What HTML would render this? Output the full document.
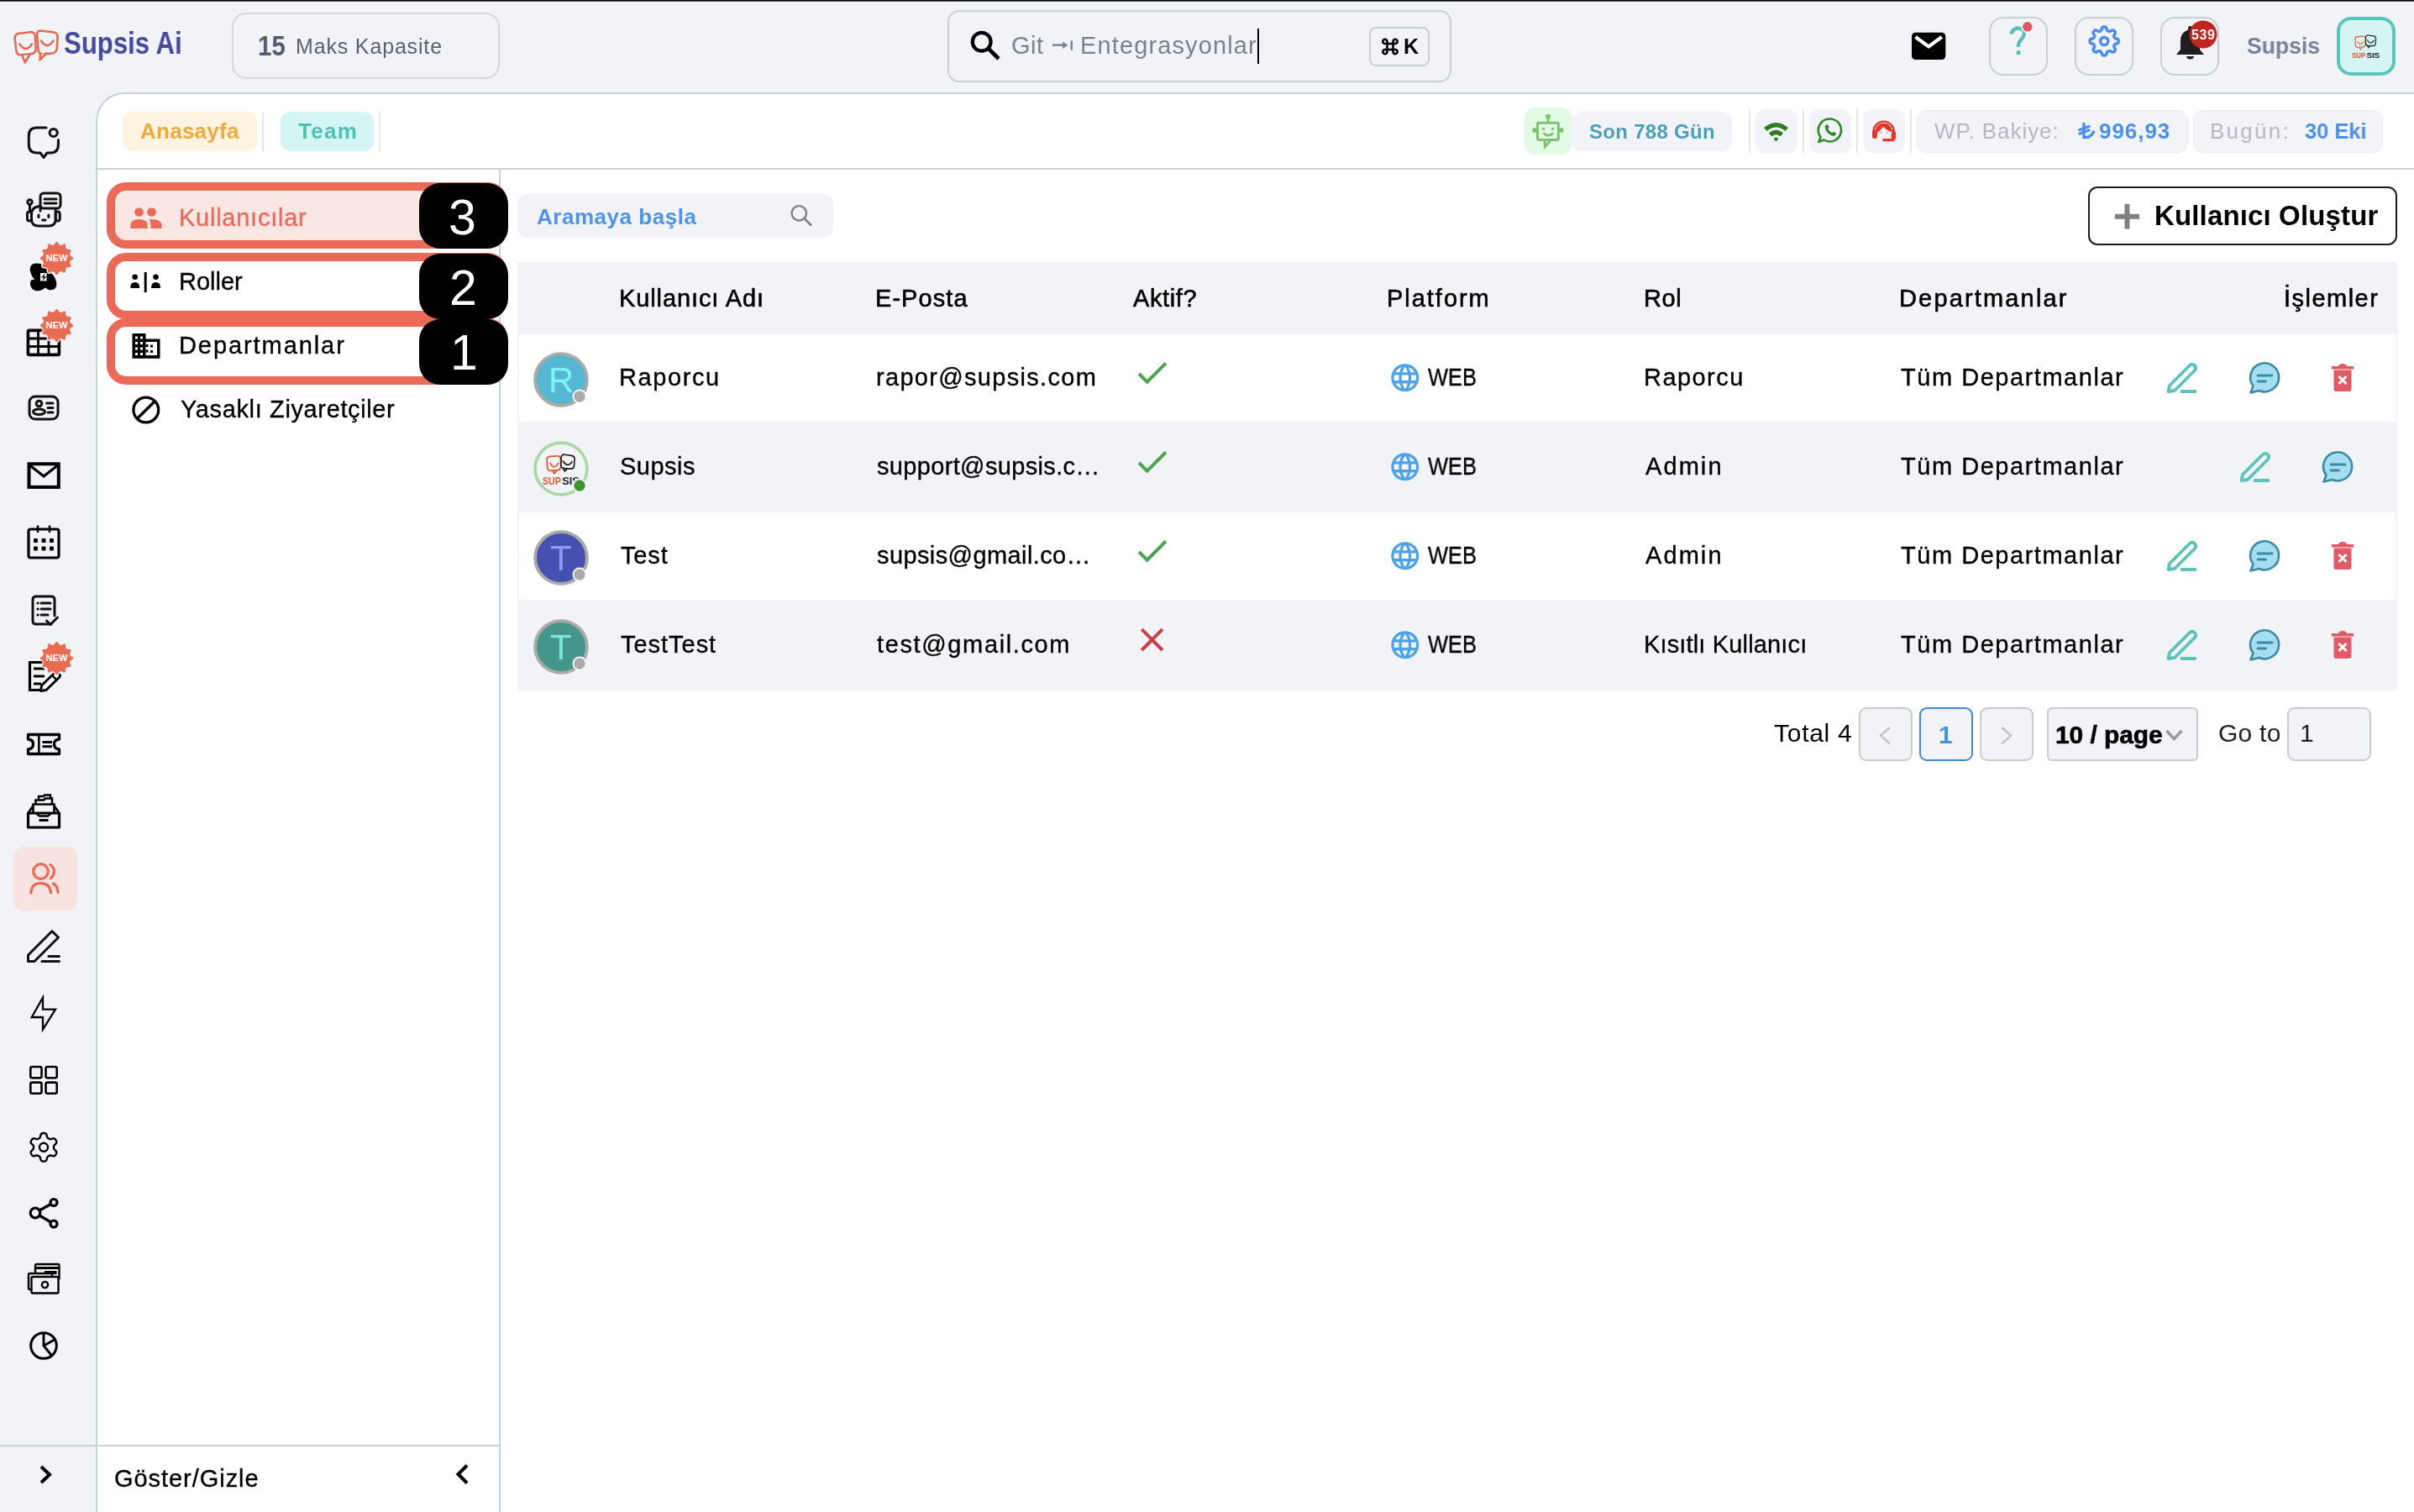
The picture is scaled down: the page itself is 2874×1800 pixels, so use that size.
<!DOCTYPE html>
<html><head><meta charset="utf-8"><title>Supsis Ai - Kullanıcılar</title>
<style>
html,body{margin:0;padding:0}
body{width:2874px;height:1800px;overflow:hidden;background:#f2f3f7;position:relative;font-family:"Liberation Sans",sans-serif}
.a{position:absolute;display:block}
.t{position:absolute;white-space:nowrap;font-family:"Liberation Sans",sans-serif;will-change:transform}
</style></head><body>
<div class=a style="left:0px;top:0px;width:2874px;height:1px;background:#000"></div>
<div class=a style="left:0px;top:1px;width:2874px;height:1px;background:#555"></div>
<svg class=a style="left:12px;top:32px;" width="64" height="46" viewBox="0 0 64 46"><g fill="none" stroke="#e36b53" stroke-width="2.6" stroke-linejoin="round" stroke-linecap="round">
<path d="M10.96 7.77 L23.54 6.23 Q29.50 5.50 29.85 11.49 L30.65 25.51 Q31.00 31.50 25.04 32.15 L13.96 33.35 Q8.00 34.00 7.30 28.04 L5.70 14.46 Q5.00 8.50 10.96 7.77 Z"/>
<path d="M14.5 34 L17.8 42.5 L23 33.5" fill="#f2f3f7"/>
<path d="M37.46 4.70 L51.04 6.30 Q57.00 7.00 56.63 12.99 L55.87 25.01 Q55.50 31.00 49.53 31.56 L39.97 32.44 Q34.00 33.00 33.48 27.02 L32.02 9.98 Q31.50 4.00 37.46 4.70 Z" fill="#f2f3f7"/>
<path d="M36 32.5 L35.5 39.5 L43 31.5" fill="#f2f3f7"/>
<path d="M11.5 20.5 Q18.5 31.5 26 20.5"/>
<path d="M37 16.5 Q44 27.5 51.5 16.5"/>
</g></svg>
<div class=t style="left:76.2px;top:33.0px;font-size:37px;line-height:37px;font-weight:700;color:#4649a0;letter-spacing:0.00px;transform:scaleX(0.8408);transform-origin:0 0;">Supsis Ai</div>
<div class=a style="left:276px;top:15px;width:319px;height:79px;border:2px solid #d6d8dc;border-radius:17px;box-sizing:border-box"></div>
<div class=t style="left:307.1px;top:37.0px;font-size:34px;line-height:34px;font-weight:700;color:#555a6e;letter-spacing:0.00px;transform:scaleX(0.8651);transform-origin:0 0;">15</div>
<div class=t style="left:351.8px;top:43.0px;font-size:25px;line-height:25px;font-weight:400;color:#5a5f72;letter-spacing:0.84px;">Maks Kapasite</div>
<div class=a style="left:1128px;top:12px;width:600px;height:86px;border:2px solid #c8cfd6;border-radius:14px;box-sizing:border-box"></div>
<svg class=a style="left:1150px;top:32px;" width="46" height="44" viewBox="0 0 46 44"><circle cx="18.7" cy="17.7" r="10.9" fill="none" stroke="#000" stroke-width="4.2"/>
<line x1="26.5" y1="25.5" x2="39" y2="38" stroke="#000" stroke-width="4.6"/></svg>
<div class=t style="left:1204.0px;top:40.3px;font-size:29px;line-height:29px;font-weight:400;color:#7c8190;letter-spacing:0.50px;">Git</div>
<svg class=a style="left:1250px;top:44px;" width="30" height="20" viewBox="0 0 30 20"><g stroke="#7c8190" stroke-width="2.4" fill="#7c8190"><line x1="3" y1="9.7" x2="17" y2="9.7"/><path d="M15 5.5 L21.5 9.7 L15 14 Z" stroke="none"/><line x1="25.8" y1="4.4" x2="25.8" y2="15.7"/></g></svg>
<div class=t style="left:1285.7px;top:40.3px;font-size:29px;line-height:29px;font-weight:400;color:#7c8190;letter-spacing:1.12px;">Entegrasyonlar</div>
<div class=a style="left:1497px;top:34px;width:2px;height:42px;background:#000"></div>
<div class=a style="left:1630px;top:32px;width:72px;height:47px;border:2px solid #c8cfd6;border-radius:8px;box-sizing:border-box"></div>
<svg class=a style="left:1644px;top:45px;" width="22" height="21" viewBox="0 0 21 21"><path d="M7 7 H14 V14 H7 Z M7 7 V4.5 A2.6 2.6 0 1 0 4.5 7 H7 M14 7 V4.5 A2.6 2.6 0 1 1 16.5 7 H14 M7 14 V16.5 A2.6 2.6 0 1 1 4.5 14 H7 M14 14 V16.5 A2.6 2.6 0 1 0 16.5 14 H14" fill="none" stroke="#000" stroke-width="2.6"/></svg>
<div class=t style="left:1671.0px;top:43.0px;font-size:25px;line-height:25px;font-weight:700;color:#000;letter-spacing:0.00px;">K</div>
<svg class=a style="left:2276px;top:38px;" width="41" height="34" viewBox="0 0 41 34"><rect x="0" y="0.7" width="40.3" height="32.3" rx="4.5" fill="#000"/>
<polyline points="4.5,6 20.2,17.5 35.8,6" fill="none" stroke="#fff" stroke-width="4.2"/></svg>
<div class=a style="left:2368px;top:20px;width:70px;height:70px;border:2px solid #c8cfd6;border-radius:17px;box-sizing:border-box"></div>
<svg class=a style="left:2388px;top:28px;" width="32" height="40" viewBox="0 0 32 40"><path d="M6 12.5 Q9 5.5 15 5.5 Q22 6 22 11.5 Q21.5 16 18 19.5 Q14.8 22.5 14.8 28" fill="none" stroke="#56c1b8" stroke-width="4.3"/>
<rect x="12.7" y="32.3" width="4.7" height="4.8" fill="#56c1b8"/></svg>
<svg class=a style="left:2405px;top:23px;" width="18" height="18" viewBox="0 0 18 18"><circle cx="8.8" cy="8.8" r="6.6" fill="#e05563" stroke="#fff" stroke-width="1.6"/></svg>
<div class=a style="left:2470px;top:20px;width:70px;height:70px;border:2px solid #c8cfd6;border-radius:17px;box-sizing:border-box"></div>
<svg class=a style="left:2483px;top:27px;" width="44" height="44" viewBox="0 0 44 44"><path d="M39.30 22.00 L39.28 22.45 L39.22 22.89 L39.11 23.33 L38.91 23.76 L38.57 24.16 L38.05 24.51 L37.32 24.80 L36.50 25.04 L35.77 25.26 L35.23 25.49 L34.86 25.75 L34.60 26.03 L34.41 26.32 L34.25 26.63 L34.12 26.94 L34.00 27.25 L33.89 27.58 L33.82 27.92 L33.80 28.30 L33.88 28.74 L34.10 29.29 L34.46 29.96 L34.87 30.71 L35.18 31.43 L35.30 32.05 L35.26 32.57 L35.10 33.01 L34.87 33.41 L34.59 33.76 L34.29 34.09 L33.96 34.39 L33.61 34.67 L33.21 34.90 L32.77 35.06 L32.25 35.10 L31.63 34.98 L30.91 34.67 L30.16 34.26 L29.49 33.90 L28.94 33.68 L28.50 33.60 L28.12 33.62 L27.78 33.69 L27.45 33.80 L27.14 33.92 L26.83 34.05 L26.52 34.21 L26.23 34.40 L25.95 34.66 L25.69 35.03 L25.46 35.57 L25.24 36.30 L25.00 37.12 L24.71 37.85 L24.36 38.37 L23.96 38.71 L23.53 38.91 L23.09 39.02 L22.65 39.08 L22.20 39.10 L21.75 39.08 L21.31 39.02 L20.87 38.91 L20.44 38.71 L20.04 38.37 L19.69 37.85 L19.40 37.12 L19.16 36.30 L18.94 35.57 L18.71 35.03 L18.45 34.66 L18.17 34.40 L17.88 34.21 L17.57 34.05 L17.26 33.92 L16.95 33.80 L16.62 33.69 L16.28 33.62 L15.90 33.60 L15.46 33.68 L14.91 33.90 L14.24 34.26 L13.49 34.67 L12.77 34.98 L12.15 35.10 L11.63 35.06 L11.19 34.90 L10.79 34.67 L10.44 34.39 L10.11 34.09 L9.81 33.76 L9.53 33.41 L9.30 33.01 L9.14 32.57 L9.10 32.05 L9.22 31.43 L9.53 30.71 L9.94 29.96 L10.30 29.29 L10.52 28.74 L10.60 28.30 L10.58 27.92 L10.51 27.58 L10.40 27.25 L10.28 26.94 L10.15 26.63 L9.99 26.32 L9.80 26.03 L9.54 25.75 L9.17 25.49 L8.63 25.26 L7.90 25.04 L7.08 24.80 L6.35 24.51 L5.83 24.16 L5.49 23.76 L5.29 23.33 L5.18 22.89 L5.12 22.45 L5.10 22.00 L5.12 21.55 L5.18 21.11 L5.29 20.67 L5.49 20.24 L5.83 19.84 L6.35 19.49 L7.08 19.20 L7.90 18.96 L8.63 18.74 L9.17 18.51 L9.54 18.25 L9.80 17.97 L9.99 17.68 L10.15 17.37 L10.28 17.06 L10.40 16.75 L10.51 16.42 L10.58 16.08 L10.60 15.70 L10.52 15.26 L10.30 14.71 L9.94 14.04 L9.53 13.29 L9.22 12.57 L9.10 11.95 L9.14 11.43 L9.30 10.99 L9.53 10.59 L9.81 10.24 L10.11 9.91 L10.44 9.61 L10.79 9.33 L11.19 9.10 L11.63 8.94 L12.15 8.90 L12.77 9.02 L13.49 9.33 L14.24 9.74 L14.91 10.10 L15.46 10.32 L15.90 10.40 L16.28 10.38 L16.62 10.31 L16.95 10.20 L17.26 10.08 L17.57 9.95 L17.88 9.79 L18.17 9.60 L18.45 9.34 L18.71 8.97 L18.94 8.43 L19.16 7.70 L19.40 6.88 L19.69 6.15 L20.04 5.63 L20.44 5.29 L20.87 5.09 L21.31 4.98 L21.75 4.92 L22.20 4.90 L22.65 4.92 L23.09 4.98 L23.53 5.09 L23.96 5.29 L24.36 5.63 L24.71 6.15 L25.00 6.88 L25.24 7.70 L25.46 8.43 L25.69 8.97 L25.95 9.34 L26.23 9.60 L26.52 9.79 L26.83 9.95 L27.14 10.08 L27.45 10.20 L27.78 10.31 L28.12 10.38 L28.50 10.40 L28.94 10.32 L29.49 10.10 L30.16 9.74 L30.91 9.33 L31.63 9.02 L32.25 8.90 L32.77 8.94 L33.21 9.10 L33.61 9.33 L33.96 9.61 L34.29 9.91 L34.59 10.24 L34.87 10.59 L35.10 10.99 L35.26 11.43 L35.30 11.95 L35.18 12.57 L34.87 13.29 L34.46 14.04 L34.10 14.71 L33.88 15.26 L33.80 15.70 L33.82 16.08 L33.89 16.42 L34.00 16.75 L34.12 17.06 L34.25 17.37 L34.41 17.68 L34.60 17.97 L34.86 18.25 L35.23 18.51 L35.77 18.74 L36.50 18.96 L37.32 19.20 L38.05 19.49 L38.57 19.84 L38.91 20.24 L39.11 20.67 L39.22 21.11 L39.28 21.55 Z" fill="none" stroke="#4a8cf0" stroke-width="3.5" stroke-linejoin="round"/>
<circle cx="22.2" cy="22" r="4.6" fill="none" stroke="#4a8cf0" stroke-width="3.5"/></svg>
<div class=a style="left:2572px;top:20px;width:70px;height:70px;border:2px solid #c8cfd6;border-radius:17px;box-sizing:border-box"></div>
<svg class=a style="left:2589px;top:29px;" width="37" height="42" viewBox="0 0 37 42"><path d="M18.8 2 Q21.5 2 21.5 4.8 L21.5 6.5 Q30 9.5 30 19.5 L30 30 L35 36 L2 36 L7 30 L7 19.5 Q7 9.5 16 6.5 L16 4.8 Q16 2 18.8 2 Z" fill="#1e1e1e"/>
<path d="M14 38 Q14.5 41.5 18.5 41.5 Q22.5 41.5 23 38 Z" fill="#1e1e1e"/></svg>
<svg class=a style="left:2605px;top:23px;" width="36" height="36" viewBox="0 0 36 36"><circle cx="18" cy="18" r="16.5" fill="#c0261d"/></svg>
<div class=t style="left:2609.4px;top:33.8px;font-size:16px;line-height:16px;font-weight:700;color:#fff;letter-spacing:0.60px;">539</div>
<div class=t style="left:2675.0px;top:42.0px;font-size:27px;line-height:27px;font-weight:700;color:#7d7f99;letter-spacing:0.00px;transform:scaleX(0.9827);transform-origin:0 0;">Supsis</div>
<div class=a style="left:2782px;top:20px;width:70px;height:70px;border:4px solid #5bc4bd;border-radius:17px;box-sizing:border-box;background:#d4f5f3"></div>
<svg class=a style="left:2800.3px;top:41px;" width="34.0" height="29.0" viewBox="0 0 34.00 29.00"><g transform="scale(1.0)" fill="none" stroke-width="1.15" stroke-linejoin="round" stroke-linecap="round">
<path d="M6.69 2.61 L13.01 2.19 Q16.00 2.00 16.07 5.00 L16.23 11.50 Q16.30 14.50 13.31 14.75 L7.49 15.25 Q4.50 15.50 4.31 12.51 L3.89 5.79 Q3.70 2.80 6.69 2.61 Z" stroke="#e2572e"/><path d="M9 15.5 L10.3 18 L12.8 15" stroke="#e2572e"/>
<path d="M6.8 8.5 Q10.3 15 14 8.5" stroke="#e2572e"/>
<path d="M19.77 0.95 L25.83 1.85 Q28.80 2.30 28.59 5.29 L28.21 10.81 Q28.00 13.80 25.01 13.60 L19.29 13.20 Q16.30 13.00 16.42 10.00 L16.68 3.50 Q16.80 0.50 19.77 0.95 Z" stroke="#222" fill="#d4f5f3" fill-opacity="0"/><path d="M18.5 13.2 L19.8 15.8 L22 13.5" stroke="#222"/>
<path d="M18.3 6.8 Q22.2 13 26.3 7.3" stroke="#222"/>
<text x="0" y="27.9" font-family="Liberation Sans" font-weight="700" font-size="9.2" fill="#e2572e" stroke="none" textLength="16.3" lengthAdjust="spacingAndGlyphs">SUP</text>
<text x="17.4" y="27.9" font-family="Liberation Sans" font-weight="700" font-size="9.2" fill="#222" stroke="none" textLength="15.7" lengthAdjust="spacingAndGlyphs">SIS</text>
</g></svg>
<div class=a style="left:114px;top:110px;width:2786px;height:1720px;border-top:2px solid #c9d1d9;border-left:2px solid #c9d1d9;border-top-left-radius:34px;background:#fff;box-sizing:border-box"></div>
<div class=a style="left:116px;top:200px;width:2758px;height:2px;background:#c9d1d9"></div>
<div class=a style="left:594px;top:202px;width:2px;height:1598px;background:#c9d1d9"></div>
<div class=a style="left:116px;top:1720px;width:478px;height:2px;background:#c9d1d9"></div>
<div class=a style="left:0px;top:1720px;width:114px;height:2px;background:#c9d1d9"></div>
<div class=a style="left:146px;top:133px;width:160px;height:47px;background:#fdf3e1;border-radius:12px"></div>
<div class=t style="left:167.0px;top:143.0px;font-size:26px;line-height:26px;font-weight:700;color:#f0a93a;letter-spacing:0.26px;">Anasayfa</div>
<div class=a style="left:312px;top:133px;width:2px;height:47px;background:#e4e6ec"></div>
<div class=a style="left:334px;top:133px;width:111px;height:47px;background:#d3f5f3;border-radius:12px"></div>
<div class=t style="left:354.8px;top:143.0px;font-size:26px;line-height:26px;font-weight:700;color:#52bfb6;letter-spacing:1.31px;">Team</div>
<div class=a style="left:451px;top:133px;width:2px;height:47px;background:#e4e6ec"></div>
<div class=a style="left:1815px;top:128px;width:56px;height:56px;background:#e3fbe4;border-radius:12px"></div>
<svg class=a style="left:1821px;top:133px;" width="44" height="46" viewBox="0 0 44 46"><g fill="none" stroke="#7ec46f" stroke-width="2.9" stroke-linejoin="round">
<rect x="9.5" y="13.3" width="24.9" height="20.2" rx="1"/>
<line x1="22.1" y1="6" x2="22.1" y2="13.3"/>
<path d="M18 33.5 L18.3 41.5 L25.5 33.5" stroke-linejoin="miter"/>
<path d="M16.5 25.3 Q22 31 28.5 25.3"/>
</g>
<circle cx="22.1" cy="5.6" r="2.9" fill="#7ec46f"/>
<rect x="15.1" y="18.9" width="2.9" height="3" fill="#7ec46f"/><rect x="26.1" y="18.9" width="2.9" height="3" fill="#7ec46f"/>
<circle cx="6.2" cy="21.9" r="3" fill="#7ec46f"/><circle cx="37.6" cy="21.9" r="3" fill="#7ec46f"/></svg>
<div class=a style="left:1871px;top:133px;width:191px;height:47px;background:#f2f3f8;border-radius:12px"></div>
<div class=t style="left:1892.0px;top:144.5px;font-size:24px;line-height:24px;font-weight:700;color:#4aa0b8;letter-spacing:0.30px;">Son 788 Gün</div>
<div class=a style="left:2082px;top:130px;width:2px;height:52px;background:#e4e6ec"></div>
<div class=a style="left:2090px;top:130px;width:50px;height:52px;background:#f2f3f8;border-radius:12px"></div>
<svg class=a style="left:2099px;top:144px;" width="32" height="26" viewBox="0 0 32 26"><path d="M1 8 Q15.5 -4 30 8 L26.5 12 Q15.5 3 4.5 12 Z" fill="#2e7d1e"/>
<path d="M7 14.5 Q15.5 7 24 14.5 L20.5 18.5 Q15.5 14 10.5 18.5 Z" fill="#2e7d1e"/>
<path d="M12.5 21 Q15.5 18.5 18.5 21 L15.5 24.5 Z" fill="#2e7d1e"/></svg>
<div class=a style="left:2146px;top:130px;width:2px;height:52px;background:#e4e6ec"></div>
<div class=a style="left:2154px;top:130px;width:50px;height:52px;background:#f2f3f8;border-radius:12px"></div>
<svg class=a style="left:2162px;top:138px;" width="34" height="36" viewBox="0 0 34 36"><path d="M17 3.5 A13.5 13.5 0 1 1 9.5 28.5 L3.5 31 L5.5 25 A13.5 13.5 0 0 1 17 3.5 Z" fill="none" stroke="#2e8a22" stroke-width="2.6" stroke-linejoin="round"/>
<path d="M11.5 11 Q10 13 11.5 16.5 Q14 21.5 19 23.5 Q22.5 24.5 23.8 22.3 L24 20.5 L20.8 18.8 L19.2 20.3 Q16 19 14.3 15.5 L15.7 13.8 L14.2 10.5 L12.6 10.3 Z" fill="#2e8a22"/></svg>
<div class=a style="left:2210px;top:130px;width:2px;height:52px;background:#e4e6ec"></div>
<div class=a style="left:2218px;top:130px;width:50px;height:52px;background:#f2f3f8;border-radius:12px"></div>
<svg class=a style="left:2226px;top:141px;" width="34" height="30" viewBox="0 0 34 30"><path d="M3.2 16 A13.4 13.4 0 0 1 30 16 L30 20 L3.2 20 Z" fill="#e8352a"/>
<path d="M8.8 25 L8.8 16.8 Q13 14.5 16.2 9.8 Q20 14.5 26.2 15.8 L26.2 25 Z" fill="#f2f3f8"/>
<path d="M6.3 14 A10.4 10.4 0 0 1 26.9 14" fill="none" stroke="#f2f3f8" stroke-width="0.9"/>
<rect x="3" y="15" width="5.8" height="9" rx="2.6" fill="#e8352a"/>
<rect x="26" y="15" width="5" height="10.5" rx="2.2" fill="#e8352a"/>
<path d="M15.5 25.6 L27.3 25.6 L27.3 19" fill="none" stroke="#e8352a" stroke-width="3.3"/>
<g stroke="#f19b9b" stroke-width="0.9"><path d="M11.8 15.2 L14.6 18 M14.6 15.2 L11.8 18"/><path d="M19.6 15.2 L22.4 18 M22.4 15.2 L19.6 18"/></g></svg>
<div class=a style="left:2274px;top:130px;width:2px;height:52px;background:#e4e6ec"></div>
<div class=a style="left:2282px;top:131px;width:323px;height:51px;background:#f3f4f8;border:1px solid #e9ebf0;border-radius:12px;box-sizing:border-box"></div>
<div class=t style="left:2302.8px;top:142.9px;font-size:26px;line-height:26px;font-weight:400;color:#b5b7c4;letter-spacing:0.95px;">WP. Bakiye:</div>
<svg class=a style="left:2474px;top:146px;" width="22" height="20" viewBox="0 0 22 20"><g stroke="#4a8ff0" stroke-width="3.4" fill="none" stroke-linecap="round"><path d="M7 1.5 V17.5 Q15 18.5 18.5 11"/><line x1="2" y1="8.5" x2="13" y2="4.5"/><line x1="2" y1="13" x2="13" y2="9"/></g></svg>
<div class=t style="left:2499.0px;top:142.9px;font-size:26px;line-height:26px;font-weight:700;color:#4a8ff0;letter-spacing:0.95px;">996,93</div>
<div class=a style="left:2611px;top:131px;width:226px;height:51px;background:#f3f4f8;border:1px solid #e9ebf0;border-radius:12px;box-sizing:border-box"></div>
<div class=t style="left:2630.5px;top:142.9px;font-size:26px;line-height:26px;font-weight:400;color:#b5b7c4;letter-spacing:2.26px;">Bugün:</div>
<div class=t style="left:2743.8px;top:142.9px;font-size:26px;line-height:26px;font-weight:700;color:#4a8ff0;letter-spacing:0.00px;transform:scaleX(0.9771);transform-origin:0 0;">30 Eki</div>
<svg class=a style="left:30px;top:148px;" width="44" height="44" viewBox="0 0 44 44"><path d="M25 4 L14 4 Q4.3 4 4.3 13.5 L4.3 24 Q4.3 34 14 34 L18 34 L22 39.5 L26 34 L30 34 Q39.4 34 39.4 24 L39.4 18.4" fill="none" stroke="#111" stroke-width="3" stroke-linejoin="round" stroke-linecap="round"/>
<circle cx="33.7" cy="10" r="4.6" fill="none" stroke="#111" stroke-width="3" stroke-linejoin="round" stroke-linecap="round"/></svg>
<svg class=a style="left:30px;top:227px;" width="44" height="46" viewBox="0 0 44 46"><rect x="18" y="3" width="24" height="18" rx="4" fill="none" stroke="#111" stroke-width="3" stroke-linejoin="round" stroke-linecap="round"/>
<line x1="23" y1="10" x2="37" y2="10" fill="none" stroke="#111" stroke-width="3" stroke-linejoin="round" stroke-linecap="round"/><line x1="23" y1="15" x2="37" y2="15" fill="none" stroke="#111" stroke-width="3" stroke-linejoin="round" stroke-linecap="round"/>
<path d="M18 20 L18 24" fill="none" stroke="#111" stroke-width="3" stroke-linejoin="round" stroke-linecap="round"/>
<path d="M18 18.5 Q7.5 19 7.5 28 L7.5 34 Q7.5 42 16 42 L28 42 Q36.2 42 36.2 34 L36.2 21.5" fill="none" stroke="#111" stroke-width="3" stroke-linejoin="round" stroke-linecap="round"/>
<rect x="2.5" y="25" width="5" height="11" rx="2.5" fill="none" stroke="#111" stroke-width="3" stroke-linejoin="round" stroke-linecap="round"/><rect x="36.2" y="25" width="5" height="11" rx="2.5" fill="none" stroke="#111" stroke-width="3" stroke-linejoin="round" stroke-linecap="round"/>
<circle cx="5.5" cy="13.5" r="2.7" fill="none" stroke="#111" stroke-width="3" stroke-linejoin="round" stroke-linecap="round"/><line x1="5.5" y1="16.5" x2="5.5" y2="25" fill="none" stroke="#111" stroke-width="3" stroke-linejoin="round" stroke-linecap="round"/>
<line x1="16" y1="29" x2="16" y2="31.5" fill="none" stroke="#111" stroke-width="3" stroke-linejoin="round" stroke-linecap="round"/><line x1="27.9" y1="29" x2="27.9" y2="31.5" fill="none" stroke="#111" stroke-width="3" stroke-linejoin="round" stroke-linecap="round"/><line x1="20.5" y1="35" x2="24" y2="35" fill="none" stroke="#111" stroke-width="3" stroke-linejoin="round" stroke-linecap="round"/></svg>
<svg class=a style="left:33px;top:311px;" width="38" height="38" viewBox="0 0 38 38"><path d="M10 2.5 C4 2.5 2 7 3 12 C4 17 7 20 8 22 L4.5 22 C2 25 2.5 31 7 34 C11 36.5 17 35 21 31.5 L22.5 32.5 C26 35.5 32 35 34 30 C35.5 25 32.5 18 28 14 L22 7 C19 3.5 14 2.5 10 2.5 Z" fill="#000"/>
<rect x="15" y="14" width="7.5" height="9.5" fill="#f2f3f7"/>
<path d="M21 14.5 L15.8 19.4 L19 19.2 L17.5 23.5 L22.3 18.3 L19.2 18.5 Z" fill="#000"/></svg>
<svg class=a style="left:47.4px;top:287.2px;" width="41" height="41" viewBox="0 0 41 41"><path d="M40.70 20.50 L40.66 21.03 L40.51 21.55 L40.21 22.05 L39.68 22.52 L38.94 22.93 L38.20 23.30 L37.64 23.68 L37.29 24.07 L37.07 24.48 L36.92 24.90 L36.83 25.34 L36.82 25.80 L36.93 26.32 L37.23 26.92 L37.68 27.62 L38.11 28.34 L38.34 29.01 L38.35 29.60 L38.22 30.12 L37.99 30.60 L37.69 31.04 L37.30 31.41 L36.79 31.70 L36.10 31.83 L35.26 31.82 L34.43 31.78 L33.76 31.82 L33.25 31.98 L32.86 32.23 L32.52 32.52 L32.23 32.86 L31.98 33.25 L31.82 33.76 L31.78 34.43 L31.82 35.26 L31.83 36.10 L31.70 36.79 L31.41 37.30 L31.04 37.69 L30.60 37.99 L30.12 38.22 L29.60 38.35 L29.01 38.34 L28.34 38.11 L27.62 37.68 L26.92 37.23 L26.32 36.93 L25.80 36.82 L25.34 36.83 L24.90 36.92 L24.48 37.07 L24.07 37.29 L23.68 37.64 L23.30 38.20 L22.93 38.94 L22.52 39.68 L22.05 40.21 L21.55 40.51 L21.03 40.66 L20.50 40.70 L19.97 40.66 L19.45 40.51 L18.95 40.21 L18.48 39.68 L18.07 38.94 L17.70 38.20 L17.32 37.64 L16.93 37.29 L16.52 37.07 L16.10 36.92 L15.66 36.83 L15.20 36.82 L14.68 36.93 L14.08 37.23 L13.38 37.68 L12.66 38.11 L11.99 38.34 L11.40 38.35 L10.88 38.22 L10.40 37.99 L9.96 37.69 L9.59 37.30 L9.30 36.79 L9.17 36.10 L9.18 35.26 L9.22 34.43 L9.18 33.76 L9.02 33.25 L8.77 32.86 L8.48 32.52 L8.14 32.23 L7.75 31.98 L7.24 31.82 L6.57 31.78 L5.74 31.82 L4.90 31.83 L4.21 31.70 L3.70 31.41 L3.31 31.04 L3.01 30.60 L2.78 30.12 L2.65 29.60 L2.66 29.01 L2.89 28.34 L3.32 27.62 L3.77 26.92 L4.07 26.32 L4.18 25.80 L4.17 25.34 L4.08 24.90 L3.93 24.48 L3.71 24.07 L3.36 23.68 L2.80 23.30 L2.06 22.93 L1.32 22.52 L0.79 22.05 L0.49 21.55 L0.34 21.03 L0.30 20.50 L0.34 19.97 L0.49 19.45 L0.79 18.95 L1.32 18.48 L2.06 18.07 L2.80 17.70 L3.36 17.32 L3.71 16.93 L3.93 16.52 L4.08 16.10 L4.17 15.66 L4.18 15.20 L4.07 14.68 L3.77 14.08 L3.32 13.38 L2.89 12.66 L2.66 11.99 L2.65 11.40 L2.78 10.88 L3.01 10.40 L3.31 9.96 L3.70 9.59 L4.21 9.30 L4.90 9.17 L5.74 9.18 L6.57 9.22 L7.24 9.18 L7.75 9.02 L8.14 8.77 L8.48 8.48 L8.77 8.14 L9.02 7.75 L9.18 7.24 L9.22 6.57 L9.18 5.74 L9.17 4.90 L9.30 4.21 L9.59 3.70 L9.96 3.31 L10.40 3.01 L10.88 2.78 L11.40 2.65 L11.99 2.66 L12.66 2.89 L13.38 3.32 L14.08 3.77 L14.68 4.07 L15.20 4.18 L15.66 4.17 L16.10 4.08 L16.52 3.93 L16.93 3.71 L17.32 3.36 L17.70 2.80 L18.07 2.06 L18.48 1.32 L18.95 0.79 L19.45 0.49 L19.97 0.34 L20.50 0.30 L21.03 0.34 L21.55 0.49 L22.05 0.79 L22.52 1.32 L22.93 2.06 L23.30 2.80 L23.68 3.36 L24.07 3.71 L24.48 3.93 L24.90 4.08 L25.34 4.17 L25.80 4.18 L26.32 4.07 L26.92 3.77 L27.62 3.32 L28.34 2.89 L29.01 2.66 L29.60 2.65 L30.12 2.78 L30.60 3.01 L31.04 3.31 L31.41 3.70 L31.70 4.21 L31.83 4.90 L31.82 5.74 L31.78 6.57 L31.82 7.24 L31.98 7.75 L32.23 8.14 L32.52 8.48 L32.86 8.77 L33.25 9.02 L33.76 9.18 L34.43 9.22 L35.26 9.18 L36.10 9.17 L36.79 9.30 L37.30 9.59 L37.69 9.96 L37.99 10.40 L38.22 10.88 L38.35 11.40 L38.34 11.99 L38.11 12.66 L37.68 13.38 L37.23 14.08 L36.93 14.68 L36.82 15.20 L36.83 15.66 L36.92 16.10 L37.07 16.52 L37.29 16.93 L37.64 17.32 L38.20 17.70 L38.94 18.07 L39.68 18.48 L40.21 18.95 L40.51 19.45 L40.66 19.97 Z" fill="#ea6c50" stroke="#f2f3f7" stroke-width="1.4"/><text x="20.5" y="24.4" text-anchor="middle" font-family="Liberation Sans" font-weight="700" font-size="11.5" fill="#fff" textLength="26" lengthAdjust="spacingAndGlyphs">NEW</text></svg>
<svg class=a style="left:31px;top:391px;" width="42" height="34" viewBox="0 0 42 34"><rect x="2.4" y="2.4" width="37" height="29" rx="1.5" fill="none" stroke="#000" stroke-width="3.6"/>
<line x1="2" y1="12" x2="40" y2="12" stroke="#000" stroke-width="2.8"/><line x1="2" y1="21.5" x2="40" y2="21.5" stroke="#000" stroke-width="2.8"/>
<line x1="14.5" y1="2" x2="14.5" y2="32" stroke="#000" stroke-width="2.8"/><line x1="27" y1="2" x2="27" y2="32" stroke="#000" stroke-width="2.8"/></svg>
<svg class=a style="left:47.4px;top:367.1px;" width="41" height="41" viewBox="0 0 41 41"><path d="M40.70 20.50 L40.66 21.03 L40.51 21.55 L40.21 22.05 L39.68 22.52 L38.94 22.93 L38.20 23.30 L37.64 23.68 L37.29 24.07 L37.07 24.48 L36.92 24.90 L36.83 25.34 L36.82 25.80 L36.93 26.32 L37.23 26.92 L37.68 27.62 L38.11 28.34 L38.34 29.01 L38.35 29.60 L38.22 30.12 L37.99 30.60 L37.69 31.04 L37.30 31.41 L36.79 31.70 L36.10 31.83 L35.26 31.82 L34.43 31.78 L33.76 31.82 L33.25 31.98 L32.86 32.23 L32.52 32.52 L32.23 32.86 L31.98 33.25 L31.82 33.76 L31.78 34.43 L31.82 35.26 L31.83 36.10 L31.70 36.79 L31.41 37.30 L31.04 37.69 L30.60 37.99 L30.12 38.22 L29.60 38.35 L29.01 38.34 L28.34 38.11 L27.62 37.68 L26.92 37.23 L26.32 36.93 L25.80 36.82 L25.34 36.83 L24.90 36.92 L24.48 37.07 L24.07 37.29 L23.68 37.64 L23.30 38.20 L22.93 38.94 L22.52 39.68 L22.05 40.21 L21.55 40.51 L21.03 40.66 L20.50 40.70 L19.97 40.66 L19.45 40.51 L18.95 40.21 L18.48 39.68 L18.07 38.94 L17.70 38.20 L17.32 37.64 L16.93 37.29 L16.52 37.07 L16.10 36.92 L15.66 36.83 L15.20 36.82 L14.68 36.93 L14.08 37.23 L13.38 37.68 L12.66 38.11 L11.99 38.34 L11.40 38.35 L10.88 38.22 L10.40 37.99 L9.96 37.69 L9.59 37.30 L9.30 36.79 L9.17 36.10 L9.18 35.26 L9.22 34.43 L9.18 33.76 L9.02 33.25 L8.77 32.86 L8.48 32.52 L8.14 32.23 L7.75 31.98 L7.24 31.82 L6.57 31.78 L5.74 31.82 L4.90 31.83 L4.21 31.70 L3.70 31.41 L3.31 31.04 L3.01 30.60 L2.78 30.12 L2.65 29.60 L2.66 29.01 L2.89 28.34 L3.32 27.62 L3.77 26.92 L4.07 26.32 L4.18 25.80 L4.17 25.34 L4.08 24.90 L3.93 24.48 L3.71 24.07 L3.36 23.68 L2.80 23.30 L2.06 22.93 L1.32 22.52 L0.79 22.05 L0.49 21.55 L0.34 21.03 L0.30 20.50 L0.34 19.97 L0.49 19.45 L0.79 18.95 L1.32 18.48 L2.06 18.07 L2.80 17.70 L3.36 17.32 L3.71 16.93 L3.93 16.52 L4.08 16.10 L4.17 15.66 L4.18 15.20 L4.07 14.68 L3.77 14.08 L3.32 13.38 L2.89 12.66 L2.66 11.99 L2.65 11.40 L2.78 10.88 L3.01 10.40 L3.31 9.96 L3.70 9.59 L4.21 9.30 L4.90 9.17 L5.74 9.18 L6.57 9.22 L7.24 9.18 L7.75 9.02 L8.14 8.77 L8.48 8.48 L8.77 8.14 L9.02 7.75 L9.18 7.24 L9.22 6.57 L9.18 5.74 L9.17 4.90 L9.30 4.21 L9.59 3.70 L9.96 3.31 L10.40 3.01 L10.88 2.78 L11.40 2.65 L11.99 2.66 L12.66 2.89 L13.38 3.32 L14.08 3.77 L14.68 4.07 L15.20 4.18 L15.66 4.17 L16.10 4.08 L16.52 3.93 L16.93 3.71 L17.32 3.36 L17.70 2.80 L18.07 2.06 L18.48 1.32 L18.95 0.79 L19.45 0.49 L19.97 0.34 L20.50 0.30 L21.03 0.34 L21.55 0.49 L22.05 0.79 L22.52 1.32 L22.93 2.06 L23.30 2.80 L23.68 3.36 L24.07 3.71 L24.48 3.93 L24.90 4.08 L25.34 4.17 L25.80 4.18 L26.32 4.07 L26.92 3.77 L27.62 3.32 L28.34 2.89 L29.01 2.66 L29.60 2.65 L30.12 2.78 L30.60 3.01 L31.04 3.31 L31.41 3.70 L31.70 4.21 L31.83 4.90 L31.82 5.74 L31.78 6.57 L31.82 7.24 L31.98 7.75 L32.23 8.14 L32.52 8.48 L32.86 8.77 L33.25 9.02 L33.76 9.18 L34.43 9.22 L35.26 9.18 L36.10 9.17 L36.79 9.30 L37.30 9.59 L37.69 9.96 L37.99 10.40 L38.22 10.88 L38.35 11.40 L38.34 11.99 L38.11 12.66 L37.68 13.38 L37.23 14.08 L36.93 14.68 L36.82 15.20 L36.83 15.66 L36.92 16.10 L37.07 16.52 L37.29 16.93 L37.64 17.32 L38.20 17.70 L38.94 18.07 L39.68 18.48 L40.21 18.95 L40.51 19.45 L40.66 19.97 Z" fill="#ea6c50" stroke="#f2f3f7" stroke-width="1.4"/><text x="20.5" y="24.4" text-anchor="middle" font-family="Liberation Sans" font-weight="700" font-size="11.5" fill="#fff" textLength="26" lengthAdjust="spacingAndGlyphs">NEW</text></svg>
<svg class=a style="left:32px;top:469px;" width="40" height="34" viewBox="0 0 40 34"><rect x="3" y="3" width="34" height="27" rx="7" fill="none" stroke="#111" stroke-width="3" stroke-linejoin="round" stroke-linecap="round"/>
<circle cx="14.5" cy="11.5" r="3.3" fill="none" stroke="#111" stroke-width="3" stroke-linejoin="round" stroke-linecap="round" stroke-width="2.6"/>
<ellipse cx="14.5" cy="21.3" rx="7" ry="3.3" fill="none" stroke="#111" stroke-width="3" stroke-linejoin="round" stroke-linecap="round" stroke-width="2.6"/>
<line x1="23.5" y1="11" x2="31" y2="11" fill="none" stroke="#111" stroke-width="3" stroke-linejoin="round" stroke-linecap="round" stroke-width="2.6"/><line x1="25" y1="16.5" x2="31" y2="16.5" fill="none" stroke="#111" stroke-width="3" stroke-linejoin="round" stroke-linecap="round" stroke-width="2.6"/><line x1="25" y1="22" x2="31" y2="22" fill="none" stroke="#111" stroke-width="3" stroke-linejoin="round" stroke-linecap="round" stroke-width="2.6"/></svg>
<svg class=a style="left:30px;top:548px;" width="44" height="36" viewBox="0 0 44 36"><rect x="4.5" y="4.3" width="35.3" height="27.6" fill="none" stroke="#000" stroke-width="4"/>
<polyline points="5,5.5 22.1,19 39.3,5.5" fill="none" stroke="#000" stroke-width="3.2"/></svg>
<svg class=a style="left:30px;top:622px;" width="44" height="46" viewBox="0 0 44 46"><rect x="4" y="8" width="36" height="34" rx="2.5" fill="none" stroke="#000" stroke-width="3.2"/>
<line x1="15" y1="3.5" x2="15" y2="12" stroke="#000" stroke-width="2.5"/><line x1="29" y1="3.5" x2="29" y2="12" stroke="#000" stroke-width="2.5"/>
<g fill="#000"><rect x="10" y="19" width="5" height="5" rx="1"/><rect x="19.5" y="19" width="5" height="5" rx="1"/><rect x="29" y="19" width="5" height="5" rx="1"/>
<rect x="10" y="28.5" width="5" height="5" rx="1"/><rect x="19.5" y="28.5" width="5" height="5" rx="1"/><rect x="29" y="28.5" width="5" height="5" rx="1"/></g></svg>
<svg class=a style="left:34px;top:706px;" width="40" height="42" viewBox="0 0 40 42"><path d="M27 37 L9 37 Q5 37 5 33 L5 8 Q5 4 9 4 L27 4 Q31 4 31 8 L31 27" fill="none" stroke="#111" stroke-width="3" stroke-linejoin="round" stroke-linecap="round" stroke-width="2.8"/>
<g fill="#000"><circle cx="11" cy="12" r="1.6"/><circle cx="11" cy="19" r="1.6"/><circle cx="11" cy="26" r="1.6"/></g>
<line x1="15" y1="12" x2="26" y2="12" fill="none" stroke="#111" stroke-width="3" stroke-linejoin="round" stroke-linecap="round" stroke-width="2.6"/><line x1="15" y1="19" x2="26" y2="19" fill="none" stroke="#111" stroke-width="3" stroke-linejoin="round" stroke-linecap="round" stroke-width="2.6"/><line x1="15" y1="26" x2="23" y2="26" fill="none" stroke="#111" stroke-width="3" stroke-linejoin="round" stroke-linecap="round" stroke-width="2.6"/>
<polyline points="21.5,33 26,37.5 34.5,29" fill="none" stroke="#111" stroke-width="3" stroke-linejoin="round" stroke-linecap="round" stroke-width="2.6"/></svg>
<svg class=a style="left:31px;top:785px;" width="44" height="42" viewBox="0 0 44 42"><path d="M20 36.5 L4.5 36.5 L4.5 3.5 L22 3.5" fill="none" stroke="#000" stroke-width="3.2"/>
<line x1="9" y1="11" x2="22" y2="11" stroke="#000" stroke-width="3"/><line x1="9" y1="20" x2="22" y2="20" stroke="#000" stroke-width="3"/><line x1="9" y1="29" x2="18" y2="29" stroke="#000" stroke-width="3"/>
<path d="M17.5 37.5 L18.5 31 L34 16 Q36 14 38 16 L39.5 17.5 Q41.5 19.5 39.5 21.5 L24 36.5 Z" fill="#f2f3f7" stroke="#000" stroke-width="2.8" stroke-linejoin="round"/>
<line x1="31" y1="19" x2="36.5" y2="24.5" stroke="#000" stroke-width="2.4"/></svg>
<svg class=a style="left:47.1px;top:763.2px;" width="41" height="41" viewBox="0 0 41 41"><path d="M40.70 20.50 L40.66 21.03 L40.51 21.55 L40.21 22.05 L39.68 22.52 L38.94 22.93 L38.20 23.30 L37.64 23.68 L37.29 24.07 L37.07 24.48 L36.92 24.90 L36.83 25.34 L36.82 25.80 L36.93 26.32 L37.23 26.92 L37.68 27.62 L38.11 28.34 L38.34 29.01 L38.35 29.60 L38.22 30.12 L37.99 30.60 L37.69 31.04 L37.30 31.41 L36.79 31.70 L36.10 31.83 L35.26 31.82 L34.43 31.78 L33.76 31.82 L33.25 31.98 L32.86 32.23 L32.52 32.52 L32.23 32.86 L31.98 33.25 L31.82 33.76 L31.78 34.43 L31.82 35.26 L31.83 36.10 L31.70 36.79 L31.41 37.30 L31.04 37.69 L30.60 37.99 L30.12 38.22 L29.60 38.35 L29.01 38.34 L28.34 38.11 L27.62 37.68 L26.92 37.23 L26.32 36.93 L25.80 36.82 L25.34 36.83 L24.90 36.92 L24.48 37.07 L24.07 37.29 L23.68 37.64 L23.30 38.20 L22.93 38.94 L22.52 39.68 L22.05 40.21 L21.55 40.51 L21.03 40.66 L20.50 40.70 L19.97 40.66 L19.45 40.51 L18.95 40.21 L18.48 39.68 L18.07 38.94 L17.70 38.20 L17.32 37.64 L16.93 37.29 L16.52 37.07 L16.10 36.92 L15.66 36.83 L15.20 36.82 L14.68 36.93 L14.08 37.23 L13.38 37.68 L12.66 38.11 L11.99 38.34 L11.40 38.35 L10.88 38.22 L10.40 37.99 L9.96 37.69 L9.59 37.30 L9.30 36.79 L9.17 36.10 L9.18 35.26 L9.22 34.43 L9.18 33.76 L9.02 33.25 L8.77 32.86 L8.48 32.52 L8.14 32.23 L7.75 31.98 L7.24 31.82 L6.57 31.78 L5.74 31.82 L4.90 31.83 L4.21 31.70 L3.70 31.41 L3.31 31.04 L3.01 30.60 L2.78 30.12 L2.65 29.60 L2.66 29.01 L2.89 28.34 L3.32 27.62 L3.77 26.92 L4.07 26.32 L4.18 25.80 L4.17 25.34 L4.08 24.90 L3.93 24.48 L3.71 24.07 L3.36 23.68 L2.80 23.30 L2.06 22.93 L1.32 22.52 L0.79 22.05 L0.49 21.55 L0.34 21.03 L0.30 20.50 L0.34 19.97 L0.49 19.45 L0.79 18.95 L1.32 18.48 L2.06 18.07 L2.80 17.70 L3.36 17.32 L3.71 16.93 L3.93 16.52 L4.08 16.10 L4.17 15.66 L4.18 15.20 L4.07 14.68 L3.77 14.08 L3.32 13.38 L2.89 12.66 L2.66 11.99 L2.65 11.40 L2.78 10.88 L3.01 10.40 L3.31 9.96 L3.70 9.59 L4.21 9.30 L4.90 9.17 L5.74 9.18 L6.57 9.22 L7.24 9.18 L7.75 9.02 L8.14 8.77 L8.48 8.48 L8.77 8.14 L9.02 7.75 L9.18 7.24 L9.22 6.57 L9.18 5.74 L9.17 4.90 L9.30 4.21 L9.59 3.70 L9.96 3.31 L10.40 3.01 L10.88 2.78 L11.40 2.65 L11.99 2.66 L12.66 2.89 L13.38 3.32 L14.08 3.77 L14.68 4.07 L15.20 4.18 L15.66 4.17 L16.10 4.08 L16.52 3.93 L16.93 3.71 L17.32 3.36 L17.70 2.80 L18.07 2.06 L18.48 1.32 L18.95 0.79 L19.45 0.49 L19.97 0.34 L20.50 0.30 L21.03 0.34 L21.55 0.49 L22.05 0.79 L22.52 1.32 L22.93 2.06 L23.30 2.80 L23.68 3.36 L24.07 3.71 L24.48 3.93 L24.90 4.08 L25.34 4.17 L25.80 4.18 L26.32 4.07 L26.92 3.77 L27.62 3.32 L28.34 2.89 L29.01 2.66 L29.60 2.65 L30.12 2.78 L30.60 3.01 L31.04 3.31 L31.41 3.70 L31.70 4.21 L31.83 4.90 L31.82 5.74 L31.78 6.57 L31.82 7.24 L31.98 7.75 L32.23 8.14 L32.52 8.48 L32.86 8.77 L33.25 9.02 L33.76 9.18 L34.43 9.22 L35.26 9.18 L36.10 9.17 L36.79 9.30 L37.30 9.59 L37.69 9.96 L37.99 10.40 L38.22 10.88 L38.35 11.40 L38.34 11.99 L38.11 12.66 L37.68 13.38 L37.23 14.08 L36.93 14.68 L36.82 15.20 L36.83 15.66 L36.92 16.10 L37.07 16.52 L37.29 16.93 L37.64 17.32 L38.20 17.70 L38.94 18.07 L39.68 18.48 L40.21 18.95 L40.51 19.45 L40.66 19.97 Z" fill="#ea6c50" stroke="#f2f3f7" stroke-width="1.4"/><text x="20.5" y="24.4" text-anchor="middle" font-family="Liberation Sans" font-weight="700" font-size="11.5" fill="#fff" textLength="26" lengthAdjust="spacingAndGlyphs">NEW</text></svg>
<svg class=a style="left:30px;top:871px;" width="44" height="30" viewBox="0 0 44 30"><path d="M3.5 3.5 L40.5 3.5 L40.5 9 Q34.5 9.5 34.5 15 Q34.5 20.5 40.5 21 L40.5 26.5 L3.5 26.5 L3.5 21 Q9.5 20.5 9.5 15 Q9.5 9.5 3.5 9 Z" fill="none" stroke="#000" stroke-width="3.3" stroke-linejoin="round"/>
<line x1="16.3" y1="4" x2="16.3" y2="26" stroke="#000" stroke-width="2.6"/>
<line x1="20.5" y1="12.5" x2="32" y2="12.5" stroke="#000" stroke-width="3"/><line x1="20.5" y1="17.7" x2="32" y2="17.7" stroke="#000" stroke-width="3"/></svg>
<svg class=a style="left:30px;top:944px;" width="44" height="44" viewBox="0 0 44 44"><path d="M3.5 41 L40.5 41 L40.5 24 L3.5 24 Z" fill="none" stroke="#000" stroke-width="3.2" stroke-linejoin="round"/>
<path d="M3.5 24 L9 16 M40.5 24 L35 16" fill="none" stroke="#000" stroke-width="2.8"/>
<path d="M13 24 L17 27.5 L27 27.5 L31 24" fill="none" stroke="#000" stroke-width="2.6"/>
<line x1="16.5" y1="32.5" x2="27.5" y2="32.5" stroke="#000" stroke-width="3"/>
<path d="M9.5 23 L9.5 13.5 L34.5 13.5 L34.5 23" fill="none" stroke="#000" stroke-width="2.6"/>
<path d="M12.5 13 L12.5 8.5 L22 8.5 L24 6.5 L32 6.5 L32 13" fill="none" stroke="#000" stroke-width="2.6"/>
<path d="M16 8 L16 4 L22 4 L23 2.5 L30 2.5 L30 6" fill="none" stroke="#000" stroke-width="2.4"/></svg>
<div class=a style="left:16px;top:1008px;width:76px;height:76px;background:#f9e3e1;border-radius:12px"></div>
<svg class=a style="left:33px;top:1026px;" width="40" height="40" viewBox="0 0 40 40"><g fill="none" stroke="#ea6a57" stroke-width="3.2" stroke-linecap="round">
<circle cx="15.5" cy="11.5" r="8.8"/>
<path d="M3.8 37 Q4.5 25.5 15.5 25.5 Q26.5 25.5 27.5 37"/>
<path d="M27 3.5 Q32 7 31.5 12 Q31 16.5 27.5 19.5"/>
<path d="M30.5 26 Q35.5 28.5 36 36.5"/>
</g></svg>
<svg class=a style="left:30px;top:1103px;" width="44" height="46" viewBox="0 0 44 46"><path d="M3.5 34 L3.5 41.5 L11 41.5 L39.5 13 L32 5.5 Z" fill="none" stroke="#111" stroke-width="3" stroke-linejoin="round" stroke-linecap="round" stroke-width="3.2"/>
<line x1="28" y1="35.5" x2="40.5" y2="35.5" fill="none" stroke="#111" stroke-width="3" stroke-linejoin="round" stroke-linecap="round" stroke-width="3"/><line x1="20" y1="41.5" x2="40.5" y2="41.5" fill="none" stroke="#111" stroke-width="3" stroke-linejoin="round" stroke-linecap="round" stroke-width="3"/></svg>
<svg class=a style="left:34px;top:1184px;" width="36" height="46" viewBox="0 0 36 46"><path d="M17 3.5 L3.8 27 L17 27 L17 41.5 L32 17.7 L17 17.7 Z" fill="none" stroke="#000" stroke-width="2.3" stroke-linejoin="miter"/></svg>
<svg class=a style="left:33px;top:1266px;" width="38" height="40" viewBox="0 0 38 40"><g fill="none" stroke="#000" stroke-width="2.6"><rect x="3.3" y="4" width="13.2" height="13.2" rx="2"/><rect x="21.5" y="4" width="13.2" height="13.2" rx="2"/><rect x="3.3" y="22.6" width="13.2" height="13.2" rx="2"/><rect x="21.5" y="22.6" width="13.2" height="13.2" rx="2"/></g></svg>
<svg class=a style="left:30px;top:1343px;" width="44" height="44" viewBox="0 0 44 44"><path d="M34.00 22.80 L34.00 23.11 L34.01 23.43 L34.03 23.75 L34.06 24.07 L34.13 24.40 L34.26 24.74 L34.48 25.11 L34.83 25.53 L35.33 26.00 L35.91 26.53 L36.47 27.09 L36.91 27.65 L37.18 28.18 L37.30 28.67 L37.31 29.14 L37.23 29.58 L37.11 30.01 L36.95 30.42 L36.76 30.81 L36.55 31.20 L36.32 31.57 L36.07 31.94 L35.79 32.28 L35.49 32.60 L35.14 32.88 L34.74 33.11 L34.25 33.26 L33.65 33.29 L32.95 33.19 L32.18 32.98 L31.43 32.74 L30.78 32.55 L30.24 32.45 L29.81 32.44 L29.45 32.51 L29.13 32.61 L28.83 32.74 L28.55 32.89 L28.27 33.04 L28.00 33.19 L27.73 33.35 L27.46 33.51 L27.19 33.69 L26.93 33.88 L26.68 34.10 L26.45 34.39 L26.24 34.76 L26.05 35.28 L25.89 35.94 L25.73 36.71 L25.52 37.48 L25.26 38.14 L24.94 38.64 L24.56 38.99 L24.16 39.22 L23.74 39.38 L23.31 39.49 L22.88 39.55 L22.44 39.59 L22.00 39.60 L21.56 39.59 L21.12 39.55 L20.69 39.49 L20.26 39.38 L19.84 39.22 L19.44 38.99 L19.06 38.64 L18.74 38.14 L18.48 37.48 L18.27 36.71 L18.11 35.94 L17.95 35.28 L17.76 34.76 L17.55 34.39 L17.32 34.10 L17.07 33.88 L16.81 33.69 L16.54 33.51 L16.27 33.35 L16.00 33.19 L15.73 33.04 L15.45 32.89 L15.17 32.74 L14.87 32.61 L14.55 32.51 L14.19 32.44 L13.76 32.45 L13.22 32.55 L12.57 32.74 L11.82 32.98 L11.05 33.19 L10.35 33.29 L9.75 33.26 L9.26 33.11 L8.86 32.88 L8.51 32.60 L8.21 32.28 L7.93 31.94 L7.68 31.57 L7.45 31.20 L7.24 30.81 L7.05 30.42 L6.89 30.01 L6.77 29.58 L6.69 29.14 L6.70 28.67 L6.82 28.18 L7.09 27.65 L7.53 27.09 L8.09 26.53 L8.67 26.00 L9.17 25.53 L9.52 25.11 L9.74 24.74 L9.87 24.40 L9.94 24.07 L9.97 23.75 L9.99 23.43 L10.00 23.11 L10.00 22.80 L10.00 22.49 L9.99 22.17 L9.97 21.85 L9.94 21.53 L9.87 21.20 L9.74 20.86 L9.52 20.49 L9.17 20.07 L8.67 19.60 L8.09 19.07 L7.53 18.51 L7.09 17.95 L6.82 17.42 L6.70 16.93 L6.69 16.46 L6.77 16.02 L6.89 15.59 L7.05 15.18 L7.24 14.79 L7.45 14.40 L7.68 14.03 L7.93 13.66 L8.21 13.32 L8.51 13.00 L8.86 12.72 L9.26 12.49 L9.75 12.34 L10.35 12.31 L11.05 12.41 L11.82 12.62 L12.57 12.86 L13.22 13.05 L13.76 13.15 L14.19 13.16 L14.55 13.09 L14.87 12.99 L15.17 12.86 L15.45 12.71 L15.73 12.56 L16.00 12.41 L16.27 12.25 L16.54 12.09 L16.81 11.91 L17.07 11.72 L17.32 11.50 L17.55 11.21 L17.76 10.84 L17.95 10.32 L18.11 9.66 L18.27 8.89 L18.48 8.12 L18.74 7.46 L19.06 6.96 L19.44 6.61 L19.84 6.38 L20.26 6.22 L20.69 6.11 L21.12 6.05 L21.56 6.01 L22.00 6.00 L22.44 6.01 L22.88 6.05 L23.31 6.11 L23.74 6.22 L24.16 6.38 L24.56 6.61 L24.94 6.96 L25.26 7.46 L25.52 8.12 L25.73 8.89 L25.89 9.66 L26.05 10.32 L26.24 10.84 L26.45 11.21 L26.68 11.50 L26.93 11.72 L27.19 11.91 L27.46 12.09 L27.73 12.25 L28.00 12.41 L28.27 12.56 L28.55 12.71 L28.83 12.86 L29.13 12.99 L29.45 13.09 L29.81 13.16 L30.24 13.15 L30.78 13.05 L31.43 12.86 L32.18 12.62 L32.95 12.41 L33.65 12.31 L34.25 12.34 L34.74 12.49 L35.14 12.72 L35.49 13.00 L35.79 13.32 L36.07 13.66 L36.32 14.03 L36.55 14.40 L36.76 14.79 L36.95 15.18 L37.11 15.59 L37.23 16.02 L37.31 16.46 L37.30 16.93 L37.18 17.42 L36.91 17.95 L36.47 18.51 L35.91 19.07 L35.33 19.60 L34.83 20.07 L34.48 20.49 L34.26 20.86 L34.13 21.20 L34.06 21.53 L34.03 21.85 L34.01 22.17 L34.00 22.49 Z" fill="none" stroke="#000" stroke-width="2.4" stroke-linejoin="round"/>
<circle cx="22" cy="22.8" r="5" fill="none" stroke="#000" stroke-width="2.4"/></svg>
<svg class=a style="left:32px;top:1424px;" width="40" height="40" viewBox="0 0 40 40"><g fill="none" stroke="#000" stroke-width="3.2"><circle cx="10" cy="20" r="5.8"/><circle cx="32" cy="7.5" r="4"/><circle cx="32" cy="33" r="4"/>
<line x1="15" y1="17" x2="28.5" y2="9.5"/><line x1="15" y1="23" x2="28.5" y2="31"/></g></svg>
<svg class=a style="left:30px;top:1502px;" width="44" height="40" viewBox="0 0 44 40"><g fill="none" stroke="#000" stroke-width="2.4">
<rect x="12" y="3" width="28.5" height="18" rx="1.5"/><line x1="12" y1="7.5" x2="40.5" y2="7.5" stroke-width="3"/>
<rect x="23" y="11" width="14.5" height="4" fill="#000" stroke="none"/>
<rect x="4" y="14" width="28" height="19" rx="1.5" fill="#f2f3f7"/>
<rect x="7.5" y="18" width="32" height="19.5" rx="1.5" fill="#f2f3f7"/>
<circle cx="23.5" cy="27.5" r="3.6"/></g></svg>
<svg class=a style="left:32px;top:1582px;" width="40" height="40" viewBox="0 0 40 40"><g fill="none" stroke="#000" stroke-width="3"><circle cx="20" cy="20" r="15.3"/><path d="M20 4.7 L20 20 L29.5 31.8"/><line x1="20" y1="20" x2="33.5" y2="12.5"/></g></svg>
<svg class=a style="left:44px;top:1741px;" width="22" height="30" viewBox="0 0 22 30"><polyline points="5,5 15,14.5 5,24" fill="none" stroke="#000" stroke-width="4"/></svg>
<div class=a style="left:127px;top:217px;width:477px;height:79px;border:10px solid #ea6a57;border-radius:23px;background:#fae6e3;box-sizing:border-box"></div>
<div class=a style="left:127px;top:301px;width:477px;height:79px;border:10px solid #ea6a57;border-radius:23px;background:#fff;box-sizing:border-box"></div>
<div class=a style="left:127px;top:379px;width:477px;height:79px;border:10px solid #ea6a57;border-radius:23px;background:#fff;box-sizing:border-box"></div>
<svg class=a style="left:151px;top:240px;" width="46" height="34" viewBox="0 0 46 34"><g fill="#ea6a57"><circle cx="14.5" cy="12.5" r="5.3"/><circle cx="29.5" cy="12.5" r="5.3"/>
<path d="M4.3 32 L4.3 28.5 Q4.3 21 14.5 21 Q24.7 21 24.7 28.5 L24.7 32 Z"/>
<path d="M27 21.3 Q29 21 29.5 21 Q41.5 21 41.5 28.5 L41.5 32 L28.5 32 L28.5 28.5 Q28.5 24 27 21.3 Z"/></g></svg>
<div class=t style="left:213.4px;top:245.4px;font-size:29px;line-height:29px;font-weight:400;color:#ea6a57;letter-spacing:0.75px;-webkit-text-stroke:0.35px currentColor;">Kullanıcılar</div>
<svg class=a style="left:151px;top:320px;" width="46" height="32" viewBox="0 0 46 32"><g fill="#000"><circle cx="9.7" cy="9.8" r="3.3"/><path d="M4.3 22 Q4.3 16 9.7 16 Q15.1 16 15.1 22 L15.1 23 L4.3 23 Z"/>
<rect x="20.7" y="4" width="3" height="24"/>
<circle cx="34.5" cy="9.8" r="3.3"/><path d="M29.1 22 Q29.1 16 34.5 16 Q39.9 16 39.9 22 L39.9 23 L29.1 23 Z"/></g></svg>
<div class=t style="left:213.4px;top:321.0px;font-size:29px;line-height:29px;font-weight:400;color:#000;letter-spacing:0.00px;-webkit-text-stroke:0.35px currentColor;">Roller</div>
<svg class=a style="left:155px;top:394px;" width="38" height="36" viewBox="0 0 38 36"><path fill="#000" d="M2.5 3 L18.5 3 L18.5 9.5 L35.5 9.5 L35.5 32.7 L2.5 32.7 Z M6 6.5 L6 9.5 L9 9.5 L9 6.5 Z M12 6.5 L12 9.5 L15 9.5 L15 6.5 Z M6 13 L6 16 L9 16 L9 13 Z M12 13 L12 16 L15 16 L15 13 Z M6 19.5 L6 22.5 L9 22.5 L9 19.5 Z M12 19.5 L12 22.5 L15 22.5 L15 19.5 Z M6 26 L6 29 L9 29 L9 26 Z M12 26 L12 29 L15 29 L15 26 Z M18.5 13 L18.5 29 L32 29 L32 13 Z"/>
<g fill="#000"><rect x="24" y="16.5" width="3" height="3"/><rect x="24" y="23" width="3" height="3"/><rect x="18.5" y="16" width="3" height="3"/><rect x="18.5" y="22.5" width="3" height="3"/></g></svg>
<div class=t style="left:213.4px;top:397.0px;font-size:29px;line-height:29px;font-weight:400;color:#000;letter-spacing:1.92px;-webkit-text-stroke:0.35px currentColor;">Departmanlar</div>
<div class=a style="left:499px;top:218px;width:106px;height:78px;background:#000;border-radius:25px"></div>
<div class=t style="left:534.1px;top:230.1px;font-size:59px;line-height:59px;font-weight:400;color:#fff;letter-spacing:0.00px;">3</div>
<div class=a style="left:499px;top:302px;width:106px;height:77.5px;background:#000;border-radius:25px"></div>
<div class=t style="left:535.3px;top:313.7px;font-size:59px;line-height:59px;font-weight:400;color:#fff;letter-spacing:0.00px;">2</div>
<div class=a style="left:499px;top:380px;width:106px;height:78px;background:#000;border-radius:25px"></div>
<div class=t style="left:536.4px;top:390.9px;font-size:59px;line-height:59px;font-weight:400;color:#fff;letter-spacing:0.00px;">1</div>
<svg class=a style="left:154px;top:468px;" width="40" height="40" viewBox="0 0 40 40"><circle cx="19.8" cy="20" r="14.9" fill="none" stroke="#000" stroke-width="3.3"/><line x1="30.5" y1="9.5" x2="9.2" y2="30.5" stroke="#000" stroke-width="3.3"/></svg>
<div class=t style="left:215.2px;top:473.2px;font-size:29px;line-height:29px;font-weight:400;color:#000;letter-spacing:0.63px;-webkit-text-stroke:0.35px currentColor;">Yasaklı Ziyaretçiler</div>
<div class=t style="left:135.8px;top:1746.0px;font-size:29px;line-height:29px;font-weight:400;color:#000;letter-spacing:0.95px;-webkit-text-stroke:0.35px currentColor;">Göster/Gizle</div>
<svg class=a style="left:536px;top:1740px;" width="28" height="30" viewBox="0 0 28 30"><polyline points="20,4.5 9.5,15 20,25.5" fill="none" stroke="#000" stroke-width="4"/></svg>
<div class=a style="left:616px;top:231px;width:376px;height:52px;background:#f2f3f7;border-radius:12px"></div>
<div class=t style="left:638.5px;top:244.5px;font-size:26px;line-height:26px;font-weight:700;color:#4f92ef;letter-spacing:0.53px;">Aramaya başla</div>
<svg class=a style="left:936px;top:240px;" width="34" height="34" viewBox="0 0 34 34"><circle cx="15.3" cy="13.8" r="8.7" fill="none" stroke="#808080" stroke-width="2.4"/><line x1="21.5" y1="20" x2="30" y2="28.5" stroke="#808080" stroke-width="2.6"/></svg>
<div class=a style="left:2486px;top:222px;width:368px;height:70px;border:2px solid #1a1a1a;border-radius:11px;box-sizing:border-box"></div>
<svg class=a style="left:2514px;top:240px;" width="36" height="36" viewBox="0 0 36 36"><line x1="4" y1="17.8" x2="33" y2="17.8" stroke="#808080" stroke-width="6"/><line x1="18.5" y1="3" x2="18.5" y2="32.5" stroke="#808080" stroke-width="6"/></svg>
<div class=t style="left:2564.5px;top:239.9px;font-size:33px;line-height:33px;font-weight:700;color:#000;letter-spacing:0.14px;">Kullanıcı Oluştur</div>
<div class=a style="left:616px;top:312px;width:2238px;height:510px;background:#f2f3f7"></div>
<div class=a style="left:618px;top:398px;width:2234px;height:104px;background:#fff"></div>
<div class=a style="left:618px;top:610px;width:2234px;height:104px;background:#fff"></div>
<div class=t style="left:737.4px;top:340.5px;font-size:29px;line-height:29px;font-weight:400;color:#000;letter-spacing:0.90px;-webkit-text-stroke:0.6px #000;">Kullanıcı Adı</div>
<div class=t style="left:1041.6px;top:340.5px;font-size:29px;line-height:29px;font-weight:400;color:#000;letter-spacing:1.06px;-webkit-text-stroke:0.6px #000;">E-Posta</div>
<div class=t style="left:1348.6px;top:340.5px;font-size:29px;line-height:29px;font-weight:400;color:#000;letter-spacing:0.60px;-webkit-text-stroke:0.6px #000;">Aktif?</div>
<div class=t style="left:1651.2px;top:340.5px;font-size:29px;line-height:29px;font-weight:400;color:#000;letter-spacing:1.97px;-webkit-text-stroke:0.6px #000;">Platform</div>
<div class=t style="left:1956.5px;top:340.5px;font-size:29px;line-height:29px;font-weight:400;color:#000;letter-spacing:0.56px;-webkit-text-stroke:0.6px #000;">Rol</div>
<div class=t style="left:2261.2px;top:340.5px;font-size:29px;line-height:29px;font-weight:400;color:#000;letter-spacing:2.16px;-webkit-text-stroke:0.6px #000;">Departmanlar</div>
<div class=t style="left:2719.2px;top:340.5px;font-size:29px;line-height:29px;font-weight:400;color:#000;letter-spacing:1.48px;-webkit-text-stroke:0.6px #000;">İşlemler</div>
<svg class=a style="left:634px;top:418.4px;" width="68" height="68" viewBox="0 0 68 68"><circle cx="34" cy="34" r="30.9" fill="#55b7d2" stroke="#aaaaaa" stroke-width="3.8"/></svg>
<div class=t style="left:653.4px;top:432.2px;font-size:42px;line-height:42px;font-weight:400;color:#7ef5f5;letter-spacing:0.00px;">R</div>
<svg class=a style="left:681px;top:463.4px;" width="18" height="18" viewBox="0 0 18 18"><circle cx="9" cy="9" r="7.6" fill="#aaaaaa" stroke="#fff" stroke-width="1.8"/></svg>
<div class=t style="left:736.8px;top:435.1px;font-size:29px;line-height:29px;font-weight:400;color:#000;letter-spacing:1.59px;-webkit-text-stroke:0.35px currentColor;">Raporcu</div>
<div class=t style="left:1042.9px;top:435.1px;font-size:29px;line-height:29px;font-weight:400;color:#000;letter-spacing:1.31px;-webkit-text-stroke:0.35px currentColor;">rapor@supsis.com</div>
<svg class=a style="left:1348px;top:420px;" width="48" height="48" viewBox="0 0 24.4 24.4"><path d="M9 16.17L4.83 12l-1.42 1.41L9 19 21 7l-1.41-1.41z" fill="#4ba54e"/></svg>
<svg class=a style="left:1652.7px;top:429.8px;" width="39.6" height="39.6" viewBox="0 0 24 24"><path d="M11.99 2C6.47 2 2 6.48 2 12s4.47 10 9.99 10C17.52 22 22 17.52 22 12S17.52 2 11.99 2zm6.93 6h-2.950c-.32-1.25-.78-2.45-1.38-3.56 1.84.63 3.370 1.91 4.33 3.56zM12 4.04c.83 1.2 1.48 2.53 1.91 3.96h-3.82c.43-1.43 1.08-2.76 1.910-3.96zM4.26 14C4.1 13.36 4 12.690 4 12s.1-1.36.26-2h3.38c-.08.66-.14 1.32-.14 2 0 .68.06 1.34.14 2H4.26zm.82 2h2.95c.32 1.25.78 2.45 1.38 3.56-1.84-.63-3.37-1.9-4.33-3.56zm2.95-8H5.08c.96-1.66 2.49-2.93 4.33-3.56C8.81 5.55 8.35 6.75 8.03 8zM12 19.96c-.83-1.2-1.48-2.53-1.91-3.96h3.820c-.43 1.43-1.08 2.76-1.91 3.96zM14.34 14H9.66c-.09-.66-.16-1.32-.16-2 0-.68.07-1.35.16-2h4.68c.09.65.16 1.32.16 2 0 .68-.07 1.34-.16 2zm.25 5.56c.6-1.11 1.06-2.31 1.38-3.56h2.95c-.96 1.65-2.49 2.93-4.33 3.56zM16.36 14c.08-.66.14-1.32.14-2 0-.68-.06-1.34-.14-2h3.38c.16.64.26 1.31.26 2s-.1 1.36-.26 2h-3.38z" fill="#4ba3ec"/></svg>
<div class=t style="left:1699.6px;top:435.1px;font-size:29px;line-height:29px;font-weight:400;color:#000;letter-spacing:0.00px;transform:scaleX(0.8777);transform-origin:0 0;-webkit-text-stroke:0.35px currentColor;">WEB</div>
<div class=t style="left:1956.7px;top:435.1px;font-size:29px;line-height:29px;font-weight:400;color:#000;letter-spacing:1.44px;-webkit-text-stroke:0.35px currentColor;">Raporcu</div>
<div class=t style="left:2263.3px;top:435.1px;font-size:29px;line-height:29px;font-weight:400;color:#000;letter-spacing:1.53px;-webkit-text-stroke:0.35px currentColor;">Tüm Departmanlar</div>
<svg class=a style="left:2575px;top:429px;" width="44" height="42" viewBox="0 0 44 42"><g fill="none" stroke="#5cc3b8" stroke-width="3.8" stroke-linejoin="round" stroke-linecap="round">
<path d="M6.5 37 L8 30 L32 6 Q35 3.5 38 6.3 Q40.5 9.3 38 12 L14 36 Z"/>
<line x1="22.5" y1="37" x2="38.5" y2="37"/></g></svg>
<svg class=a style="left:2675px;top:429px;" width="42" height="42" viewBox="0 0 42 42"><path d="M7.5 30.5 A17 17 0 1 1 14.5 36 L4.5 38.5 Z" fill="#a5def0" stroke="#3d8aa6" stroke-width="2.6" stroke-linejoin="round"/>
<line x1="13" y1="18" x2="30" y2="18" stroke="#3d8aa6" stroke-width="2.8" stroke-linecap="round"/><line x1="13" y1="25" x2="22.5" y2="25" stroke="#3d8aa6" stroke-width="2.8" stroke-linecap="round"/></svg>
<svg class=a style="left:2773px;top:430px;" width="32" height="38" viewBox="0 0 32 38"><g fill="#e25a65"><rect x="2.8" y="6" width="26.4" height="3.6"/><path d="M10.5 6.5 Q11.5 3 16 3 Q20.5 3 21.5 6.5 Z"/>
<path d="M5.5 10.5 L26.5 10.5 L26.5 33 Q26.5 36 23.5 36 L8.5 36 Q5.5 36 5.5 33 Z"/></g>
<path d="M11.5 18 L20.5 27 M20.5 18 L11.5 27" stroke="#fff" stroke-width="3"/></svg>
<svg class=a style="left:634px;top:524.4px;" width="68" height="68" viewBox="0 0 68 68"><circle cx="34" cy="34" r="30.9" fill="#f2f3f7" stroke="#a9d8a5" stroke-width="3.6"/></svg>
<svg class=a style="left:645.7px;top:539.8px;" width="45.22" height="38.57" viewBox="0 0 45.22 38.57"><g transform="scale(1.33)" fill="none" stroke-width="1.3" stroke-linejoin="round" stroke-linecap="round">
<path d="M6.69 2.61 L13.01 2.19 Q16.00 2.00 16.07 5.00 L16.23 11.50 Q16.30 14.50 13.31 14.75 L7.49 15.25 Q4.50 15.50 4.31 12.51 L3.89 5.79 Q3.70 2.80 6.69 2.61 Z" stroke="#e2572e"/><path d="M9 15.5 L10.3 18 L12.8 15" stroke="#e2572e"/>
<path d="M6.8 8.5 Q10.3 15 14 8.5" stroke="#e2572e"/>
<path d="M19.77 0.95 L25.83 1.85 Q28.80 2.30 28.59 5.29 L28.21 10.81 Q28.00 13.80 25.01 13.60 L19.29 13.20 Q16.30 13.00 16.42 10.00 L16.68 3.50 Q16.80 0.50 19.77 0.95 Z" stroke="#222" fill="#d4f5f3" fill-opacity="0"/><path d="M18.5 13.2 L19.8 15.8 L22 13.5" stroke="#222"/>
<path d="M18.3 6.8 Q22.2 13 26.3 7.3" stroke="#222"/>
<text x="0" y="27.9" font-family="Liberation Sans" font-weight="700" font-size="9.2" fill="#e2572e" stroke="none" textLength="16.3" lengthAdjust="spacingAndGlyphs">SUP</text>
<text x="17.4" y="27.9" font-family="Liberation Sans" font-weight="700" font-size="9.2" fill="#222" stroke="none" textLength="15.7" lengthAdjust="spacingAndGlyphs">SIS</text>
</g></svg>
<svg class=a style="left:681px;top:569.4px;" width="18" height="18" viewBox="0 0 18 18"><circle cx="9" cy="9" r="7.6" fill="#3e962b" stroke="#fff" stroke-width="1.8"/></svg>
<div class=t style="left:737.8px;top:541.1px;font-size:29px;line-height:29px;font-weight:400;color:#000;letter-spacing:0.47px;-webkit-text-stroke:0.35px currentColor;">Supsis</div>
<div class=t style="left:1043.9px;top:541.1px;font-size:29px;line-height:29px;font-weight:400;color:#000;letter-spacing:0.34px;-webkit-text-stroke:0.35px currentColor;">support@supsis.c…</div>
<svg class=a style="left:1348px;top:526px;" width="48" height="48" viewBox="0 0 24.4 24.4"><path d="M9 16.17L4.83 12l-1.42 1.41L9 19 21 7l-1.41-1.41z" fill="#4ba54e"/></svg>
<svg class=a style="left:1652.7px;top:535.8px;" width="39.6" height="39.6" viewBox="0 0 24 24"><path d="M11.99 2C6.47 2 2 6.48 2 12s4.47 10 9.99 10C17.52 22 22 17.52 22 12S17.52 2 11.99 2zm6.93 6h-2.950c-.32-1.25-.78-2.45-1.38-3.56 1.84.63 3.370 1.91 4.33 3.56zM12 4.04c.83 1.2 1.48 2.53 1.91 3.96h-3.82c.43-1.43 1.08-2.76 1.910-3.96zM4.26 14C4.1 13.36 4 12.690 4 12s.1-1.36.26-2h3.38c-.08.66-.14 1.32-.14 2 0 .68.06 1.34.14 2H4.26zm.82 2h2.95c.32 1.25.78 2.45 1.38 3.56-1.84-.63-3.37-1.9-4.33-3.56zm2.95-8H5.08c.96-1.66 2.49-2.93 4.33-3.56C8.81 5.55 8.35 6.75 8.03 8zM12 19.96c-.83-1.2-1.48-2.53-1.91-3.96h3.820c-.43 1.43-1.08 2.76-1.91 3.96zM14.34 14H9.66c-.09-.66-.16-1.32-.16-2 0-.68.07-1.35.16-2h4.68c.09.65.16 1.32.16 2 0 .68-.07 1.34-.16 2zm.25 5.56c.6-1.11 1.06-2.31 1.38-3.56h2.95c-.96 1.65-2.49 2.93-4.33 3.56zM16.36 14c.08-.66.14-1.32.14-2 0-.68-.06-1.34-.14-2h3.38c.16.64.26 1.31.26 2s-.1 1.36-.26 2h-3.38z" fill="#4ba3ec"/></svg>
<div class=t style="left:1699.6px;top:541.1px;font-size:29px;line-height:29px;font-weight:400;color:#000;letter-spacing:0.00px;transform:scaleX(0.8777);transform-origin:0 0;-webkit-text-stroke:0.35px currentColor;">WEB</div>
<div class=t style="left:1958.7px;top:541.1px;font-size:29px;line-height:29px;font-weight:400;color:#000;letter-spacing:2.08px;-webkit-text-stroke:0.35px currentColor;">Admin</div>
<div class=t style="left:2263.3px;top:541.1px;font-size:29px;line-height:29px;font-weight:400;color:#000;letter-spacing:1.53px;-webkit-text-stroke:0.35px currentColor;">Tüm Departmanlar</div>
<svg class=a style="left:2661.5px;top:535px;" width="44" height="42" viewBox="0 0 44 42"><g fill="none" stroke="#5cc3b8" stroke-width="3.8" stroke-linejoin="round" stroke-linecap="round">
<path d="M6.5 37 L8 30 L32 6 Q35 3.5 38 6.3 Q40.5 9.3 38 12 L14 36 Z"/>
<line x1="22.5" y1="37" x2="38.5" y2="37"/></g></svg>
<svg class=a style="left:2761.5px;top:535px;" width="42" height="42" viewBox="0 0 42 42"><path d="M7.5 30.5 A17 17 0 1 1 14.5 36 L4.5 38.5 Z" fill="#a5def0" stroke="#3d8aa6" stroke-width="2.6" stroke-linejoin="round"/>
<line x1="13" y1="18" x2="30" y2="18" stroke="#3d8aa6" stroke-width="2.8" stroke-linecap="round"/><line x1="13" y1="25" x2="22.5" y2="25" stroke="#3d8aa6" stroke-width="2.8" stroke-linecap="round"/></svg>
<svg class=a style="left:634px;top:630.4px;" width="68" height="68" viewBox="0 0 68 68"><circle cx="34" cy="34" r="30.9" fill="#4650b0" stroke="#aaaaaa" stroke-width="3.8"/></svg>
<div class=t style="left:654.5px;top:644.2px;font-size:42px;line-height:42px;font-weight:400;color:#8d9cf2;letter-spacing:0.00px;">T</div>
<svg class=a style="left:681px;top:675.4px;" width="18" height="18" viewBox="0 0 18 18"><circle cx="9" cy="9" r="7.6" fill="#aaaaaa" stroke="#fff" stroke-width="1.8"/></svg>
<div class=t style="left:738.8px;top:647.1px;font-size:29px;line-height:29px;font-weight:400;color:#000;letter-spacing:0.86px;-webkit-text-stroke:0.35px currentColor;">Test</div>
<div class=t style="left:1043.9px;top:647.1px;font-size:29px;line-height:29px;font-weight:400;color:#000;letter-spacing:0.40px;-webkit-text-stroke:0.35px currentColor;">supsis@gmail.co…</div>
<svg class=a style="left:1348px;top:632px;" width="48" height="48" viewBox="0 0 24.4 24.4"><path d="M9 16.17L4.83 12l-1.42 1.41L9 19 21 7l-1.41-1.41z" fill="#4ba54e"/></svg>
<svg class=a style="left:1652.7px;top:641.8px;" width="39.6" height="39.6" viewBox="0 0 24 24"><path d="M11.99 2C6.47 2 2 6.48 2 12s4.47 10 9.99 10C17.52 22 22 17.52 22 12S17.52 2 11.99 2zm6.93 6h-2.950c-.32-1.25-.78-2.45-1.38-3.56 1.84.63 3.370 1.91 4.33 3.56zM12 4.04c.83 1.2 1.48 2.53 1.91 3.96h-3.82c.43-1.43 1.08-2.76 1.910-3.96zM4.26 14C4.1 13.36 4 12.690 4 12s.1-1.36.26-2h3.38c-.08.66-.14 1.32-.14 2 0 .68.06 1.34.14 2H4.26zm.82 2h2.95c.32 1.25.78 2.45 1.38 3.56-1.84-.63-3.37-1.9-4.33-3.56zm2.95-8H5.08c.96-1.66 2.49-2.93 4.33-3.56C8.81 5.55 8.35 6.75 8.03 8zM12 19.96c-.83-1.2-1.48-2.53-1.91-3.96h3.820c-.43 1.43-1.08 2.76-1.91 3.96zM14.34 14H9.66c-.09-.66-.16-1.32-.16-2 0-.68.07-1.35.16-2h4.68c.09.65.16 1.32.16 2 0 .68-.07 1.34-.16 2zm.25 5.56c.6-1.11 1.06-2.31 1.38-3.56h2.95c-.96 1.65-2.49 2.93-4.33 3.56zM16.36 14c.08-.66.14-1.32.14-2 0-.68-.06-1.34-.14-2h3.38c.16.64.26 1.31.26 2s-.1 1.36-.26 2h-3.38z" fill="#4ba3ec"/></svg>
<div class=t style="left:1699.6px;top:647.1px;font-size:29px;line-height:29px;font-weight:400;color:#000;letter-spacing:0.00px;transform:scaleX(0.8777);transform-origin:0 0;-webkit-text-stroke:0.35px currentColor;">WEB</div>
<div class=t style="left:1958.7px;top:647.1px;font-size:29px;line-height:29px;font-weight:400;color:#000;letter-spacing:2.08px;-webkit-text-stroke:0.35px currentColor;">Admin</div>
<div class=t style="left:2263.3px;top:647.1px;font-size:29px;line-height:29px;font-weight:400;color:#000;letter-spacing:1.53px;-webkit-text-stroke:0.35px currentColor;">Tüm Departmanlar</div>
<svg class=a style="left:2575px;top:641px;" width="44" height="42" viewBox="0 0 44 42"><g fill="none" stroke="#5cc3b8" stroke-width="3.8" stroke-linejoin="round" stroke-linecap="round">
<path d="M6.5 37 L8 30 L32 6 Q35 3.5 38 6.3 Q40.5 9.3 38 12 L14 36 Z"/>
<line x1="22.5" y1="37" x2="38.5" y2="37"/></g></svg>
<svg class=a style="left:2675px;top:641px;" width="42" height="42" viewBox="0 0 42 42"><path d="M7.5 30.5 A17 17 0 1 1 14.5 36 L4.5 38.5 Z" fill="#a5def0" stroke="#3d8aa6" stroke-width="2.6" stroke-linejoin="round"/>
<line x1="13" y1="18" x2="30" y2="18" stroke="#3d8aa6" stroke-width="2.8" stroke-linecap="round"/><line x1="13" y1="25" x2="22.5" y2="25" stroke="#3d8aa6" stroke-width="2.8" stroke-linecap="round"/></svg>
<svg class=a style="left:2773px;top:642px;" width="32" height="38" viewBox="0 0 32 38"><g fill="#e25a65"><rect x="2.8" y="6" width="26.4" height="3.6"/><path d="M10.5 6.5 Q11.5 3 16 3 Q20.5 3 21.5 6.5 Z"/>
<path d="M5.5 10.5 L26.5 10.5 L26.5 33 Q26.5 36 23.5 36 L8.5 36 Q5.5 36 5.5 33 Z"/></g>
<path d="M11.5 18 L20.5 27 M20.5 18 L11.5 27" stroke="#fff" stroke-width="3"/></svg>
<svg class=a style="left:634px;top:736.4px;" width="68" height="68" viewBox="0 0 68 68"><circle cx="34" cy="34" r="30.9" fill="#44968a" stroke="#aaaaaa" stroke-width="3.8"/></svg>
<div class=t style="left:654.5px;top:750.2px;font-size:42px;line-height:42px;font-weight:400;color:#7de8d6;letter-spacing:0.00px;">T</div>
<svg class=a style="left:681px;top:781.4px;" width="18" height="18" viewBox="0 0 18 18"><circle cx="9" cy="9" r="7.6" fill="#aaaaaa" stroke="#fff" stroke-width="1.8"/></svg>
<div class=t style="left:738.8px;top:753.1px;font-size:29px;line-height:29px;font-weight:400;color:#000;letter-spacing:0.97px;-webkit-text-stroke:0.35px currentColor;">TestTest</div>
<div class=t style="left:1043.9px;top:753.1px;font-size:29px;line-height:29px;font-weight:400;color:#000;letter-spacing:1.63px;-webkit-text-stroke:0.35px currentColor;">test@gmail.com</div>
<svg class=a style="left:1348px;top:738px;" width="48" height="48" viewBox="0 0 24.4 24.4"><path d="M19 6.41L17.59 5 12 10.59 6.41 5 5 6.41 10.59 12 5 17.59 6.41 19 12 13.41 17.59 19 19 17.59 13.41 12z" fill="#cc3e48"/></svg>
<svg class=a style="left:1652.7px;top:747.8px;" width="39.6" height="39.6" viewBox="0 0 24 24"><path d="M11.99 2C6.47 2 2 6.48 2 12s4.47 10 9.99 10C17.52 22 22 17.52 22 12S17.52 2 11.99 2zm6.93 6h-2.950c-.32-1.25-.78-2.45-1.38-3.56 1.84.63 3.370 1.91 4.33 3.56zM12 4.04c.83 1.2 1.48 2.53 1.91 3.96h-3.82c.43-1.43 1.08-2.76 1.910-3.96zM4.26 14C4.1 13.36 4 12.690 4 12s.1-1.36.26-2h3.38c-.08.66-.14 1.32-.14 2 0 .68.06 1.34.14 2H4.26zm.82 2h2.95c.32 1.25.78 2.45 1.38 3.56-1.84-.63-3.37-1.9-4.33-3.56zm2.95-8H5.08c.96-1.66 2.49-2.93 4.33-3.56C8.81 5.55 8.35 6.75 8.03 8zM12 19.96c-.83-1.2-1.48-2.53-1.91-3.96h3.820c-.43 1.43-1.08 2.76-1.91 3.96zM14.34 14H9.66c-.09-.66-.16-1.32-.16-2 0-.68.07-1.35.16-2h4.68c.09.65.16 1.32.16 2 0 .68-.07 1.34-.16 2zm.25 5.56c.6-1.11 1.06-2.31 1.38-3.56h2.95c-.96 1.65-2.49 2.93-4.33 3.56zM16.36 14c.08-.66.14-1.32.14-2 0-.68-.06-1.34-.14-2h3.38c.16.64.26 1.31.26 2s-.1 1.36-.26 2h-3.38z" fill="#4ba3ec"/></svg>
<div class=t style="left:1699.6px;top:753.1px;font-size:29px;line-height:29px;font-weight:400;color:#000;letter-spacing:0.00px;transform:scaleX(0.8777);transform-origin:0 0;-webkit-text-stroke:0.35px currentColor;">WEB</div>
<div class=t style="left:1956.7px;top:753.1px;font-size:29px;line-height:29px;font-weight:400;color:#000;letter-spacing:0.15px;-webkit-text-stroke:0.35px currentColor;">Kısıtlı Kullanıcı</div>
<div class=t style="left:2263.3px;top:753.1px;font-size:29px;line-height:29px;font-weight:400;color:#000;letter-spacing:1.53px;-webkit-text-stroke:0.35px currentColor;">Tüm Departmanlar</div>
<svg class=a style="left:2575px;top:747px;" width="44" height="42" viewBox="0 0 44 42"><g fill="none" stroke="#5cc3b8" stroke-width="3.8" stroke-linejoin="round" stroke-linecap="round">
<path d="M6.5 37 L8 30 L32 6 Q35 3.5 38 6.3 Q40.5 9.3 38 12 L14 36 Z"/>
<line x1="22.5" y1="37" x2="38.5" y2="37"/></g></svg>
<svg class=a style="left:2675px;top:747px;" width="42" height="42" viewBox="0 0 42 42"><path d="M7.5 30.5 A17 17 0 1 1 14.5 36 L4.5 38.5 Z" fill="#a5def0" stroke="#3d8aa6" stroke-width="2.6" stroke-linejoin="round"/>
<line x1="13" y1="18" x2="30" y2="18" stroke="#3d8aa6" stroke-width="2.8" stroke-linecap="round"/><line x1="13" y1="25" x2="22.5" y2="25" stroke="#3d8aa6" stroke-width="2.8" stroke-linecap="round"/></svg>
<svg class=a style="left:2773px;top:748px;" width="32" height="38" viewBox="0 0 32 38"><g fill="#e25a65"><rect x="2.8" y="6" width="26.4" height="3.6"/><path d="M10.5 6.5 Q11.5 3 16 3 Q20.5 3 21.5 6.5 Z"/>
<path d="M5.5 10.5 L26.5 10.5 L26.5 33 Q26.5 36 23.5 36 L8.5 36 Q5.5 36 5.5 33 Z"/></g>
<path d="M11.5 18 L20.5 27 M20.5 18 L11.5 27" stroke="#fff" stroke-width="3"/></svg>
<div class=t style="left:2111.9px;top:858.4px;font-size:30px;line-height:30px;font-weight:400;color:#000;letter-spacing:0.73px;">Total 4</div>
<div class=a style="left:2213px;top:842px;width:64px;height:64px;border:2px solid #c8cbd0;border-radius:9px;background:#f2f3f7;box-sizing:border-box"></div>
<svg class=a style="left:2232px;top:860px;" width="24" height="32" viewBox="0 0 24 32"><polyline points="18,6 7.2,15.6 18,25.5" fill="none" stroke="#c4c4c4" stroke-width="2.6"/></svg>
<div class=a style="left:2285px;top:842px;width:64px;height:64px;border:2px solid #3e86e0;border-radius:9px;background:#f2f3f7;box-sizing:border-box"></div>
<div class=t style="left:2308.0px;top:860.0px;font-size:30px;line-height:30px;font-weight:700;color:#4a90e2;letter-spacing:0.00px;">1</div>
<div class=a style="left:2357px;top:842px;width:64px;height:64px;border:2px solid #c8cbd0;border-radius:9px;background:#f2f3f7;box-sizing:border-box"></div>
<svg class=a style="left:2377px;top:860px;" width="24" height="32" viewBox="0 0 24 32"><polyline points="6.3,6 17.1,15.6 6.3,25.5" fill="none" stroke="#c4c4c4" stroke-width="2.6"/></svg>
<div class=a style="left:2437px;top:842px;width:180px;height:64px;border:2px solid #c8cbd0;border-radius:6px;background:#f2f3f7;box-sizing:border-box"></div>
<div class=t style="left:2447.4px;top:860.2px;font-size:30px;line-height:30px;font-weight:700;color:#000;letter-spacing:-0.09px;-webkit-text-stroke:0.6px #000;">10 / page</div>
<svg class=a style="left:2575px;top:864px;" width="28" height="24" viewBox="0 0 28 24"><polyline points="4.5,6 13.4,15.5 22.5,6" fill="none" stroke="#999" stroke-width="3.4"/></svg>
<div class=t style="left:2640.5px;top:858.3px;font-size:30px;line-height:30px;font-weight:400;color:#222;letter-spacing:0.25px;">Go to</div>
<div class=a style="left:2723px;top:842px;width:100px;height:64px;border:2px solid #c8cbd0;border-radius:9px;background:#f2f3f7;box-sizing:border-box"></div>
<div class=t style="left:2738.0px;top:858.3px;font-size:30px;line-height:30px;font-weight:400;color:#222;letter-spacing:0.00px;">1</div>
</body></html>
